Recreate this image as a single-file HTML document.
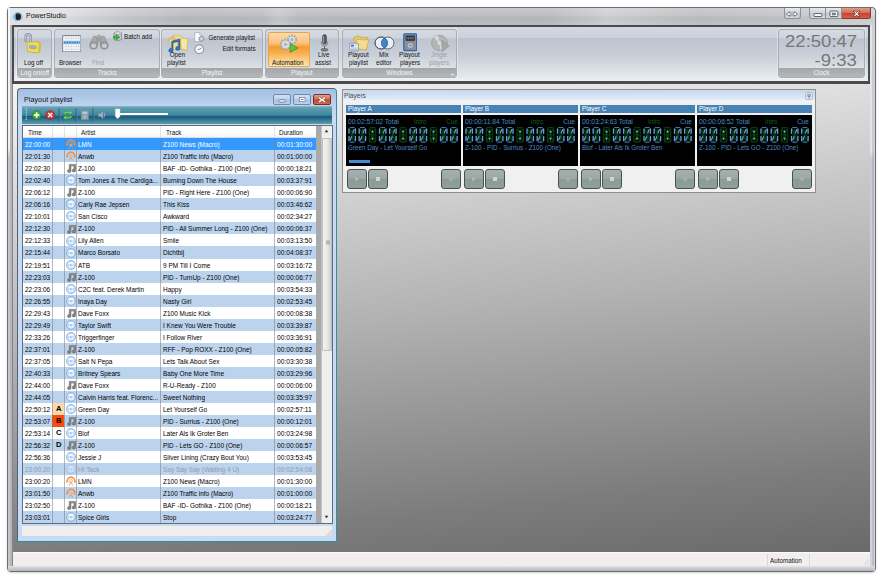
<!DOCTYPE html>
<html lang="en">
<head>
<meta charset="utf-8">
<title>PowerStudio</title>
<style>
html,body{margin:0;padding:0;background:#fff;}
body{width:885px;height:583px;position:relative;overflow:hidden;font-family:"Liberation Sans",sans-serif;font-size:7.5px;color:#000;line-height:1;}
div,span,svg{position:absolute;box-sizing:border-box;}
span.n{position:relative;display:inline-block;white-space:nowrap;transform:scaleX(.84);transform-origin:0 50%;}
span.n.r{transform-origin:100% 50%;}
span.n.m{transform-origin:50% 50%;}
b{font-weight:bold}

/* main window frame */
#win{left:7px;top:7px;width:868.5px;height:564.5px;border-radius:4px;background:linear-gradient(180deg,rgba(255,255,255,.22) 0,rgba(255,255,255,.05) 9px,rgba(0,0,0,.03) 10px,rgba(0,0,0,0) 18px),linear-gradient(90deg,#e1e3e6 0,#dcdee1 60px,#c6c8cb 120px,#b9bbbe 180px,#bbbdc0 255px,#c7c9cc 272px,#bbbdc0 292px,#b9bbbe 540px,#c3c5c8 575px,#cdcfd2 600px,#c6c8cb 640px,#bdbfc2 690px,#c2c4c7 780px,#d0d2d5 868px);box-shadow:0 0 0 1px #6c6e72 inset,0 1px 2px rgba(0,0,0,.18);overflow:hidden;}
#win .fl1{left:1px;top:1px;width:1.6px;height:563px;background:linear-gradient(180deg,#f4f5f6 0,#eceeef 140px,#c2c6ca 150px,#c2c6ca 100%);}
#win .fl2{left:2.6px;top:18px;width:2.6px;height:546px;background:#b3b7bc;}
#win .fr0{left:862.5px;top:76px;width:1px;height:484px;background:#a9abae;}
#win .fr1{left:863.2px;top:18px;width:2.2px;height:546px;background:linear-gradient(180deg,#e2e4e7 0,#e2e4e7 126px,#c9ccd0 134px,#d0d3d7 100%);}
#win .fr2{left:865.4px;top:18px;width:2.1px;height:546px;background:linear-gradient(180deg,#cdd0d4 0,#c6c9cd 126px,#b4b8bd 134px,#bcc0c5 100%);}
#win .fb{left:1px;top:559.2px;width:866.5px;height:4.4px;background:linear-gradient(180deg,#e2e4e7 0,#c9ccd0 45%,#b4b8bd 100%);}
#ttl{left:25.6px;top:12.3px;font-size:7.8px;color:#111;transform:scaleX(.9);transform-origin:0 50%;white-space:nowrap;}
#appico{left:13px;top:11.5px;width:9.5px;height:9.5px;}
.wb{top:7.8px;height:11.3px;border:1px solid #8c9096;border-top:none;background:linear-gradient(180deg,#e6e9ec 0,#d2d6da 45%,#bfc4c9 50%,#d4d8dc 100%);}
#wb-arr{left:783.5px;width:17px;border-radius:0 0 3px 3px;}
#wb-min{left:809px;width:17px;border-radius:0 0 0 3px;}
#wb-max{left:825.5px;width:16.5px;border-left:none;}
#wb-cls{left:841.5px;width:29.5px;border-radius:0 0 3px 0;border-color:#8a3a2c;border-left:none;background:linear-gradient(180deg,#e39a8a 0,#d4705c 45%,#c4432c 50%,#d2604a 100%);}

/* ribbon */
#rbf{left:12px;top:25px;width:858.1px;height:58.7px;background:#4b4b4b;}
#rb{left:14px;top:27px;width:853.8px;height:54.3px;background:linear-gradient(180deg,#d3d8e0 0,#ccd2db 10.7px,#bcc3ce 11.3px,#c9d0d8 30px,#e3e9ec 50px,#eef2f3 100%);}
.grp{top:29.1px;height:49.3px;border:1px solid #a9aeb6;border-radius:3px;background:linear-gradient(180deg,#d6dbe2 0,#cfd4dd 8.1px,#bec4cf 8.7px,#cbd1d9 26px,#dde2e6 39px,#dde2e6 100%);overflow:hidden;box-shadow:0 0 0 1px rgba(255,255,255,.35);}
.grp .gl{left:-10px;right:-10px;bottom:0;height:9.5px;background:linear-gradient(180deg,#a3a5a7 0,#b6b8ba 100%);color:#fff;text-align:center;font-size:7.6px;line-height:9.5px;}
.grp .gl span{position:relative;display:inline-block;white-space:nowrap;transform:scaleX(.85);top:.5px;opacity:.9;}
.rt{font-size:7.6px;white-space:nowrap;color:#111;}
.rt.d{color:#9aa0a8;}
.rt span.n{transform:scaleX(.82);}

/* MDI */
#mdi{left:13px;top:83.7px;width:856.5px;height:468.3px;background:linear-gradient(174deg,#f5f5f5 0,#b2b2b2 49%,#7c7c7c 85%,#6a6a6a 100%);}
#lb{left:12px;top:83.7px;width:1px;height:482.5px;background:#858585;}
#sb{left:13px;top:552px;width:856.5px;height:14.2px;background:#f1eeed;border-top:1px solid #fbfafa;}
#sb .sp{top:1px;width:1px;height:12px;background:#dcd9d7;}

/* playlist child window */
#pw{left:17px;top:88px;width:320px;height:454px;border-radius:4px 4px 1px 1px;border:1px solid #55636f;border-bottom-color:#2f89a3;border-right-color:#3a8aa8;background:linear-gradient(180deg,#a3bfe3 0,#bcd3ef 16px,#c6dcf6 30px,#c6dcf6 100%);}
#pw .cap{left:6px;top:6.6px;font-size:7.25px;color:#111;white-space:nowrap;}
.cb{top:5px;height:10.6px;border:1px solid #7189a8;border-radius:2px;background:linear-gradient(180deg,#d3e2f5 0,#bcd1ec 48%,#a6c0e3 52%,#bcd3ef 100%);}
#tb{left:4px;top:17.1px;width:310.2px;height:17.8px;background:linear-gradient(180deg,#93bccb 0,#6ba5b5 7%,#5e9cae 13%,#4b8fa6 35%,#3d839e 52%,#1c607f 57%,#1b5f7f 62%,#2a6f8a 72%,#4a8ba0 88%,#5c9aaa 100%);}
#lv{left:3.5px;top:36.3px;width:311.2px;height:399.2px;border:1px solid #666c74;border-top-width:1.2px;background:#fff;overflow:hidden;}
#lvh{left:0;top:0;width:293.6px;height:11.5px;background:linear-gradient(180deg,#fff 0,#fff 55%,#f3f4f6 100%);border-bottom:1px solid #d9dde2;}
#lvh .hs{top:0;width:1px;height:11px;background:#dfe2e6;}
#lvh .ht{top:2.9px;font-size:7.5px;color:#111;}
#rows{left:0;top:11.9px;width:293.6px;height:387px;}
.row{left:0;width:293.6px;height:12.1px;background:#fff;}
.row.alt{background:#bcd3ee;}
.row.sel{background:#3399ff;color:#fff;}
.row.dis{color:#909bab;}
.c{top:0;height:12.1px;font-size:7.7px;line-height:13.2px;white-space:nowrap;overflow:hidden;}
.c1{left:0;width:29.7px;padding-left:2.6px;}
.c3{left:41.6px;width:12px;border-left:1px solid rgba(120,125,135,.55);}
.c4{left:53.5px;width:84.3px;padding-left:1.1px;border-left:1px solid rgba(120,125,135,.55);}
.c5{left:137.8px;width:114px;padding-left:2px;border-left:1px solid rgba(120,125,135,.55);}
.c6{left:251.2px;width:42.4px;padding-left:2.4px;border-left:1px solid rgba(120,125,135,.55);}
.mk{left:29.8px;top:0;width:11.8px;height:12.1px;border-left:1px solid rgba(120,125,135,.55);text-align:center;line-height:12.2px;font-size:7.6px;color:#000;}
.mkA{background:#fcd9a9;}
.mkB{background:#fb4a0a;}
.row.nm::after{content:"";position:absolute;left:29.8px;top:0;width:1px;height:100%;background:rgba(120,125,135,.55);}
.c6 span.n{transform:scaleX(.865);}
.ri{left:1.2px;top:1.1px;width:10px;height:10px;}

#vs0{left:293.6px;top:0;width:5.6px;height:399px;background:linear-gradient(90deg,#a9a9a9 0,#aaa 75%,#d0d0d0 100%);}
#vs{left:299.2px;top:0;width:10px;height:399px;background:#efefef;}
#vs .th{left:0;top:11.5px;width:10px;height:213px;background:linear-gradient(90deg,#f4f4f4 0,#e9e9e9 50%,#cfcfcf 100%);border:1px solid #bdbdbd;border-radius:1px;}
#pst{left:4px;top:436.6px;width:310.2px;height:10.8px;background:#f1eeed;}

/* Players */
#pp{left:342px;top:88.6px;width:473.6px;height:104.8px;border:1px solid #8b8f94;background:#f0f0f0;}
#pp .cap{left:0;top:0;width:471.6px;height:12px;background:linear-gradient(180deg,#c8d8ec 0,#d6e3f2 50%,#e6eef8 85%,#f4f7fb 100%);}
#pp .capt{left:1.4px;top:2.8px;font-size:8px;color:#4a4a4a;}
.pl{top:15.4px;width:115px;height:85px;}
.plh{left:0;top:0;width:115px;height:8.3px;background:#4682b4;color:#fff;font-size:7.6px;line-height:8.8px;padding-left:2px;}
.disp{left:0;top:10px;width:115px;height:50.8px;background:#000;color:#4c8ac4;font-size:7.5px;}
.disp .tot{left:2.4px;top:2.6px;}
.disp .tot span.n{transform:scaleX(.885);}
.disp .intro{left:67.5px;top:2.8px;color:#0c6414;}
.disp .cue{right:3.6px;top:2.8px;color:#4c8ac4;}
.disp .cue.on{color:#0c6414;}
.disp .seg{left:0;top:11px;}
.disp .trk{left:1.8px;top:29.4px;}
.disp .prog{left:3px;top:45px;width:21px;height:2.8px;background:#4a8ad0;}
.pb{top:63.8px;width:19.6px;height:19.8px;border:1px solid #48524f;border-radius:3px;background:linear-gradient(180deg,#a4b0ad 0,#9aa8a5 48%,#8c9b98 52%,#909f9c 100%);}
.pb svg{left:4.8px;top:4.8px;}
</style>
</head>
<body>
<div id="win"><div class="fl1"></div><div class="fl2"></div><div class="fr0"></div><div class="fr1"></div><div class="fr2"></div><div class="fb"></div></div>
<svg id="appico" viewBox="0 0 10 10"><circle cx="5" cy="5" r="4.5" fill="#e8ecf0" stroke="#8e969e" stroke-width=".7"/><circle cx="5" cy="5" r="3.6" fill="#2f9fd8"/><path d="M5 1.4 A3.6 3.6 0 0 1 5 8.6 A3.6 3.6 0 0 1 3.6 8.3 L3.2 1.9 A3.6 3.6 0 0 1 5 1.4 Z" fill="#20303c"/><path d="M3.2 2.3 L8 5 L3.2 7.6 Z" fill="#151a20"/></svg>
<div id="ttl">PowerStudio</div>
<div class="wb" id="wb-arr"></div>
<div class="wb" id="wb-min"></div>
<div class="wb" id="wb-max"></div>
<div class="wb" id="wb-cls"></div>
<svg style="left:785px;top:9.5px;width:14px;height:8px" viewBox="0 0 14 8"><path d="M1.6 4 L4.6 1.6 V3.1 H9.4 V1.6 L12.4 4 L9.4 6.4 V4.9 H4.6 V6.4 Z" fill="#fff" stroke="#70757c" stroke-width=".9" stroke-linejoin="round"/></svg>
<svg style="left:812px;top:9.5px;width:12px;height:8px" viewBox="0 0 12 8"><rect x="2" y="3.6" width="7.8" height="2.9" rx=".8" fill="#fff" stroke="#4c5058" stroke-width=".9"/></svg>
<svg style="left:828px;top:9.5px;width:12px;height:8px" viewBox="0 0 12 8"><rect x="2" y="1" width="7.8" height="5.6" rx=".8" fill="#fff" stroke="#4c5058" stroke-width=".9"/><rect x="4.1" y="3" width="3.6" height="2" fill="#8d929a" stroke="#4c5058" stroke-width=".5"/></svg>
<svg style="left:851px;top:9.5px;width:12px;height:8px" viewBox="0 0 12 8"><path d="M2.2 1 H4.4 L5.6 2.6 L6.8 1 H9 L6.8 3.8 L9 6.6 H6.8 L5.6 5 L4.4 6.6 H2.2 L4.4 3.8 Z" fill="#fff" stroke="#5e241a" stroke-width=".7" stroke-linejoin="round"/></svg>

<div id="rbf"></div>
<div id="rb"></div>

<!-- ribbon groups -->
<div class="grp" style="left:17px;width:35px"><div class="gl"><span>Log on/off</span></div></div>
<div class="grp" style="left:54.3px;width:105.5px"><div class="gl"><span>Tracks</span></div></div>
<div class="grp" style="left:161.3px;width:101.7px"><div class="gl"><span>Playlist</span></div></div>
<div class="grp" style="left:264.7px;width:74.8px"><div class="gl"><span>Playout</span></div></div>
<div class="grp" style="left:341.6px;width:115.4px"><div class="gl"><span>Windows</span></div></div>
<div class="grp" style="left:777.7px;width:87.5px"><div class="gl"><span>Clock</span></div></div>

<!-- ribbon contents -->
<div id="autob" style="left:267.5px;top:31.5px;width:42.5px;height:35px;border:1px solid #e8a44c;border-radius:2px;background:linear-gradient(180deg,#fbd9ae 0,#f9c381 30%,#f7b15a 37%,#f59c2e 42%,#f7ab48 58%,#fbcf88 82%,#fde4b4 100%);"></div>

<!-- icons: lock -->
<svg style="left:23px;top:32px;width:19px;height:22px" viewBox="0 0 19 22"><path d="M2.7 8.8 V4.9 A2.5 2.7 0 0 1 7.7 4.9 V11" fill="none" stroke="#7f8e9e" stroke-width="2.5" stroke-linecap="round"/><path d="M2.7 8.6 V4.9 A2.5 2.7 0 0 1 7.7 4.9 V11" fill="none" stroke="#c9d5df" stroke-width="1" stroke-linecap="round"/><path d="M4.2 10.2 L15.4 9.6 L17.2 11 L17 19.6 L14.8 21 L4.4 19.4 Z" fill="#e3cb3c" stroke="#b8a22a" stroke-width=".7"/><path d="M4.6 10.6 L15 10.2 L14.8 20.4 L4.8 19 Z" fill="#efdc58"/><rect x="6.3" y="13.6" width="7" height="3" rx="1.5" fill="#9fb4cc" stroke="#7f90a8" stroke-width=".5" transform="rotate(5 10 15)"/></svg>
<div class="rt" style="left:23.7px;top:58.6px"><span class="n">Log off</span></div>

<!-- browser -->
<svg style="left:61.5px;top:34.5px;width:19.5px;height:17.5px" viewBox="0 0 19.5 17.5"><rect x=".6" y=".6" width="18.3" height="16.3" rx="1" fill="#fff" stroke="#7d8896" stroke-width="1.1"/><rect x="1.6" y="6" width="16.3" height="3" fill="#3b8fe0"/><path d="M1.4 3.4 H18 M1.4 6 H18 M1.4 9 H18 M1.4 11.6 H18 M1.4 14.2 H18 M4 1.4 V16.2 M6.6 1.4 V16.2 M9.2 1.4 V16.2 M11.8 1.4 V16.2 M14.4 1.4 V16.2 M16.8 1.4 V16.2" stroke="#c3cad4" stroke-width=".6"/></svg>
<div class="rt" style="left:59.4px;top:58.6px"><span class="n" style="transform:scaleX(.81)">Browser</span></div>

<!-- find (binoculars) -->
<svg style="left:88.5px;top:34.3px;width:20px;height:16px" viewBox="0 0 20 16"><rect x="7.4" y="3.2" width="5" height="5.4" fill="#a2a2a2"/><circle cx="9.9" cy="2.5" r="1.7" fill="#b0b0b0" stroke="#8e8e8e" stroke-width=".5"/><path d="M.9 11 L4.2 2.8 Q5.9 1.2 7.6 2.8 L8.6 11 Z" fill="#aaa" stroke="#8c8c8c" stroke-width=".6"/><path d="M11.2 11 L12.2 2.8 Q13.9 1.2 15.6 2.8 L18.9 11 Z" fill="#aaa" stroke="#8c8c8c" stroke-width=".6"/><ellipse cx="4.6" cy="11.5" rx="3.9" ry="3.7" fill="#9e9e9e" stroke="#858585" stroke-width=".7"/><ellipse cx="15.3" cy="11.5" rx="3.9" ry="3.7" fill="#9e9e9e" stroke="#858585" stroke-width=".7"/><ellipse cx="4.6" cy="11.7" rx="2.5" ry="2.3" fill="#cacaca"/><ellipse cx="15.3" cy="11.7" rx="2.5" ry="2.3" fill="#cacaca"/></svg>
<div class="rt d" style="left:91.5px;top:58.6px"><span class="n">Find</span></div>

<!-- batch add -->
<svg style="left:112.6px;top:31.3px;width:9.5px;height:10.5px" viewBox="0 0 9.5 10.5"><path d="M1 2 Q4.7 .2 8.5 2 V8.6 Q4.7 10.6 1 8.6 Z" fill="#c9ced4" stroke="#70777f" stroke-width=".7"/><ellipse cx="4.75" cy="2.1" rx="3.7" ry="1.2" fill="#e9edf0" stroke="#70777f" stroke-width=".5"/><path d="M.6 5.2 H3.4 V3.4 L6.8 6.2 L3.4 9 V7.2 H.6 Z" fill="#3fb33a" stroke="#1f7a1c" stroke-width=".5"/></svg>
<div class="rt" style="left:124px;top:33.4px"><span class="n">Batch add</span></div>

<!-- open playlist -->
<svg style="left:167.5px;top:33.5px;width:21px;height:20px" viewBox="0 0 21 20"><path d="M.8 4.8 L6.3 1.3 L13 1.8 L14.1 3.8 L19.7 4.8 L18.7 16.1 L3.2 15.1 Z" fill="#e3c56e" stroke="#c6a248" stroke-width=".5"/><path d="M.8 4.8 L8.8 6.6 L9.8 15.6 L3.2 15.1 Z" fill="#f3dc96" stroke="#d2b25a" stroke-width=".4"/><path d="M12.4 4.4 L19.7 4.8 L18.7 16.1 L13.6 15 Z" fill="#f7e5aa" stroke="#d2b25a" stroke-width=".4"/><path d="M6.3 1.3 L13 1.8 L14.1 3.8 L12.4 4.4 L8.8 6.6 Z" fill="#f1d98c"/><path d="M3.8 7.2 L11.9 5 V14.4 A2.1 1.9 0 1 1 10.7 12.7 V7.2 L5 8.8 V16.4 A2.1 1.9 0 1 1 3.8 14.7 Z" fill="#2c78d6" stroke="#103f86" stroke-width=".5"/></svg>
<div class="rt" style="left:168px;top:51.3px;width:18px;text-align:center"><span class="n m" style="left:0">Open</span></div>
<div class="rt" style="left:167.2px;top:58.6px"><span class="n" style="transform:scaleX(.81)">playlist</span></div>

<!-- generate playlist / edit formats -->
<svg style="left:194px;top:31.5px;width:11px;height:10.5px" viewBox="0 0 11 10.5"><path d="M.8 .6 H5.4 L7.6 2.8 V9.6 H.8 Z" fill="#fff" stroke="#9aa2ac" stroke-width=".7"/><path d="M5.4 .6 V2.8 H7.6" fill="#e4e8ee" stroke="#9aa2ac" stroke-width=".5"/><circle cx="7.4" cy="6.8" r="2.7" fill="#aab8c8" stroke="#76869a" stroke-width=".8" stroke-dasharray="1.1 .7"/><circle cx="7.4" cy="6.8" r="1" fill="#eef2f6"/></svg>
<svg style="left:194px;top:44px;width:10.5px;height:10.5px" viewBox="0 0 10.5 10.5"><circle cx="5.25" cy="5.25" r="4.4" fill="#f6f7f8" stroke="#979ba1" stroke-width="1.2"/><path d="M5.25 5.25 L7.6 3.8 M5.25 5.25 L3.6 5.9" stroke="#555" stroke-width=".7" fill="none"/></svg>
<div class="rt" style="right:629.8px;top:33.6px"><span class="n r" style="transform:scaleX(.815)">Generate playlist</span></div>
<div class="rt" style="right:629.8px;top:44.9px"><span class="n r" style="transform:scaleX(.815)">Edit formats</span></div>

<!-- automation -->
<svg style="left:278.5px;top:34px;width:20px;height:19px" viewBox="0 0 20 19"><g fill="#e3e6ea" stroke="#9fa5ad"><circle cx="13" cy="5.6" r="4.1" stroke-dasharray="1.5 1.1" stroke-width="2"/><circle cx="13" cy="5.6" r="3.5" stroke-width=".6"/><circle cx="6.6" cy="10.4" r="4.7" stroke-dasharray="1.7 1.2" stroke-width="2.2"/><circle cx="6.6" cy="10.4" r="4" stroke-width=".6"/></g><circle cx="6.6" cy="10.4" r="1.5" fill="#b9bfc7" stroke="#8b929b" stroke-width=".5"/><circle cx="13" cy="5.6" r="1.3" fill="#b9bfc7" stroke="#8b929b" stroke-width=".5"/><path d="M11.2 9.6 L19 14 L11.2 18.4 Z" fill="#55c744" stroke="#2f8f27" stroke-width=".7"/></svg>
<div class="rt" style="left:272.3px;top:58.6px"><span class="n">Automation</span></div>

<!-- live assist -->
<svg style="left:318.5px;top:34px;width:11px;height:18px" viewBox="0 0 11 18"><rect x="3.6" y=".6" width="3.8" height="9.6" rx="1.9" fill="#55595d" stroke="#3a3e42" stroke-width=".6"/><path d="M4.5 2 V8.8" stroke="#a4aab0" stroke-width=".8"/><path d="M2.2 7.6 Q2.2 12 5.5 12 Q8.8 12 8.8 7.6" fill="none" stroke="#6a6e72" stroke-width=".8"/><path d="M5.5 12 V14.8" stroke="#6a6e72" stroke-width="1"/><ellipse cx="5.5" cy="15.8" rx="3.6" ry="1.4" fill="#7a7e82" stroke="#4c5054" stroke-width=".5"/></svg>
<div class="rt" style="left:318.4px;top:51.3px"><span class="n">Live</span></div>
<div class="rt" style="left:315.4px;top:58.6px"><span class="n">assist</span></div>

<!-- playout playlist -->
<svg style="left:348.5px;top:34.5px;width:20px;height:17px" viewBox="0 0 20 17"><path d="M4.8 2.6 L9.6 .8 L11.4 2.2 L18.8 2.8 L17.4 14.8 L5.6 13.6 Z" fill="#e6c86a" stroke="#c09a38" stroke-width=".6"/><path d="M8 4.4 L19.6 5 L17.4 14.8 L5.6 13.6 Z" fill="#f4dc90" stroke="#c9a548" stroke-width=".6"/><rect x=".8" y="8.2" width="8.6" height="7.6" rx=".6" fill="#f2f5f9" stroke="#6a7f9a" stroke-width=".7"/><rect x="2" y="9.6" width="3" height="2" fill="#3a78c8"/><path d="M5.8 10 H8.4 M2 13 H8.4 M2 14.4 H8.4" stroke="#6f8fb8" stroke-width=".6"/></svg>
<div class="rt" style="left:347.6px;top:51.3px"><span class="n">Playout</span></div>
<div class="rt" style="left:348.6px;top:58.6px"><span class="n">playlist</span></div>

<!-- mix editor -->
<svg style="left:373.5px;top:35.5px;width:21px;height:14px" viewBox="0 0 21 14"><ellipse cx="7.2" cy="7" rx="6.2" ry="6" fill="#e6f0fa" stroke="#4d5661" stroke-width=".9"/><ellipse cx="13.8" cy="7" rx="6.2" ry="6" fill="#e6f0fa" stroke="#4d5661" stroke-width=".9"/><path d="M10.5 1.9 A6.2 6 0 0 1 10.5 12.1 A6.2 6 0 0 1 10.5 1.9 Z" fill="#3b86d8" stroke="#2a5a9a" stroke-width=".5"/><ellipse cx="7.2" cy="7" rx="6.2" ry="6" fill="none" stroke="#4d5661" stroke-width=".8"/></svg>
<div class="rt" style="left:379px;top:51.3px"><span class="n">Mix</span></div>
<div class="rt" style="left:375.6px;top:58.6px"><span class="n">editor</span></div>

<!-- playout players -->
<svg style="left:402.5px;top:33.2px;width:14.5px;height:18.5px" viewBox="0 0 14.5 18.5"><rect x=".8" y=".8" width="12.9" height="16.9" rx="1.2" fill="#8a9098" stroke="#2f66b4" stroke-width="1.3"/><rect x="2.6" y="2.6" width="9.3" height="5.2" fill="#2b2f36"/><path d="M4 4 V6.4 M5.6 4 V6.4 M7.2 4 V6.4 M8.8 4 V6.4 M10.2 4 V6.4" stroke="#9aa2ae" stroke-width=".7"/><circle cx="7.25" cy="12.4" r="3.2" fill="#b9bec6" stroke="#6a7079" stroke-width=".6"/><circle cx="7.25" cy="12.4" r="1.1" fill="#8a9098"/></svg>
<div class="rt" style="left:399.4px;top:51.3px"><span class="n">Playout</span></div>
<div class="rt" style="left:399.8px;top:58.6px"><span class="n">players</span></div>

<!-- jingle players -->
<svg style="left:431px;top:33.5px;width:19.5px;height:18.5px" viewBox="0 0 19.5 18.5"><circle cx="8.4" cy="9" r="7.8" fill="#b4b6b8" stroke="#97999b" stroke-width=".8"/><circle cx="8.4" cy="9" r="2.2" fill="#dcdee0" stroke="#a8aaac" stroke-width=".5"/><path d="M8.4 9 L3 3.4 A7.8 7.8 0 0 1 7 1.3 Z M8.4 9 L13.8 14.6 A7.8 7.8 0 0 1 9.8 16.7 Z" fill="#e2e3e4" opacity=".8"/><path d="M11 6.2 L18.4 12 L11 17.6 Z" fill="#a6a8aa" stroke="#909294" stroke-width=".6"/></svg>
<div class="rt d" style="left:431px;top:51.3px"><span class="n">Jingle</span></div>
<div class="rt d" style="left:429.2px;top:58.6px"><span class="n">players</span></div>
<div style="left:450.5px;top:70.5px;font-size:6px;color:#fff">+</div>

<!-- clock -->
<div id="clk1" style="right:27.8px;top:33.4px;font-size:17px;color:#777;white-space:nowrap;transform:scaleX(1.09);transform-origin:100% 50%">22:50:47</div>
<div id="clk2" style="right:27.8px;top:51.8px;font-size:17px;color:#777;white-space:nowrap;transform:scaleX(1.09);transform-origin:100% 50%">-9:33</div>

<!-- MDI client -->
<div id="mdi"></div>
<div id="lb"></div>
<div id="sb"><div class="sp" style="left:754.3px"></div><div class="sp" style="left:796.4px"></div><div style="left:757.2px;top:3.6px;font-size:7.5px;color:#111"><span class="n">Automation</span></div>
<svg style="right:1px;bottom:1px;width:7px;height:7px" viewBox="0 0 7 7"><path d="M5.5 1.5 h1 v1 h-1z M5.5 3.5 h1 v1 h-1z M5.5 5.5 h1 v1 h-1z M3.5 3.5 h1 v1 h-1z M3.5 5.5 h1 v1 h-1z M1.5 5.5 h1 v1 h-1z" fill="#c5c2c0"/></svg></div>

<!-- Playout playlist window -->
<div id="pw">
<div class="cap">Playout playlist</div>
<div class="cb" style="left:255px;width:18.2px"><svg viewBox="0 0 16 9" style="left:2px;top:.5px;width:12px;height:7.5px"><rect x="3.6" y="4.6" width="8.8" height="3" rx=".8" fill="#fff" stroke="#45556c" stroke-width=".9"/></svg></div>
<div class="cb" style="left:275px;width:18.2px"><svg viewBox="0 0 16 9" style="left:2px;top:.5px;width:12px;height:7.5px"><rect x="4.5" y="1.5" width="7.5" height="5.5" fill="#fff" stroke="#4a5a70" stroke-width=".7"/><path d="M6.5 4.2 H10" stroke="#4a5a70" stroke-width="1"/></svg></div>
<div class="cb" style="left:294.5px;width:18.8px;border-color:#7a3024;background:linear-gradient(180deg,#e2a090 0,#d06a54 48%,#c0452e 52%,#d46a52 100%)"><svg viewBox="0 0 16 9" style="left:2.5px;top:.5px;width:12px;height:7.5px"><path d="M4.6 .6 L8 3 L11.4 .6 L13.2 2.2 L10.2 4.5 L13.2 6.8 L11.4 8.4 L8 6 L4.6 8.4 L2.8 6.8 L5.8 4.5 L2.8 2.2 Z" fill="#fff" stroke="#6a2a20" stroke-width=".6"/></svg></div>
<div id="tb">
<svg style="left:0;top:0;width:115px;height:17.6px" viewBox="0 0 115 17.6">
<path d="M4.3 2 v1 M4.3 4.2 v1 M4.3 6.4 v1 M4.3 8.6 v1 M4.3 10.8 v1 M4.3 13 v1" stroke="#e4eef2" stroke-width="1"/>
<circle cx="14.6" cy="9" r="4.3" fill="#3fae37" stroke="#2a7f28" stroke-width=".7"/><path d="M14.6 6.2 V11.8 M11.8 9 H17.4" stroke="#fff" stroke-width="1.5"/>
<circle cx="28.2" cy="9" r="4.3" fill="#d9352e" stroke="#9c2420" stroke-width=".7"/><path d="M26.2 7 L30.2 11 M30.2 7 L26.2 11" stroke="#fff" stroke-width="1.4"/>
<path d="M37.3 2.5 V15.5" stroke="#1d5872" stroke-width="1"/><path d="M38.1 2.5 V15.5" stroke="#6fa6b8" stroke-width=".5"/>
<path d="M41.4 8 Q41.6 5.6 44.4 5.6 H47.4 V4 L50.4 6.4 L47.4 8.8 V7.2 H44.6 Q43.2 7.2 43 8 Z" fill="#6fd85e" stroke="#2f8f2a" stroke-width=".4"/>
<path d="M50.2 10 Q50 12.4 47.2 12.4 H44.2 V14 L41.2 11.6 L44.2 9.2 V10.8 H47 Q48.4 10.8 48.6 10 Z" fill="#6fd85e" stroke="#2f8f2a" stroke-width=".4"/>
<path d="M54.2 2.5 V15.5" stroke="#1d5872" stroke-width="1"/><path d="M55 2.5 V15.5" stroke="#6fa6b8" stroke-width=".5"/>
<rect x="59.2" y="4.6" width="7.2" height="9" fill="#8fa2ac" stroke="#7890a0" stroke-width=".5"/><rect x="60.4" y="5.8" width="4.8" height="2.2" fill="#b9c6cc"/><circle cx="62.8" cy="11" r="1.6" fill="#a9b8c0"/>
<path d="M71.2 2.5 V15.5" stroke="#1d5872" stroke-width="1"/><path d="M72 2.5 V15.5" stroke="#6fa6b8" stroke-width=".5"/>
<path d="M76.4 7.6 H78.4 L81 5.2 V12.8 L78.4 10.4 H76.4 Z" fill="#9fb0b8" stroke="#7f949e" stroke-width=".4"/><path d="M82.2 6.8 Q83.6 9 82.2 11.2" stroke="#b4c4cc" stroke-width=".7" fill="none"/>
<path d="M93.4 2.9 H98 V10.4 L95.7 12.8 L93.4 10.4 Z" fill="#fff" stroke="#d0dde4" stroke-width=".4"/>
</svg>
<div style="left:97.5px;top:6.7px;width:48.5px;height:1.8px;background:#fff"></div>
</div>
<div id="lv">
<div id="lvh">
<div class="hs" style="left:29.8px"></div><div class="hs" style="left:41.6px"></div><div class="hs" style="left:53.5px"></div><div class="hs" style="left:137.8px"></div><div class="hs" style="left:251.2px"></div>
<div class="ht" style="left:5px"><span class="n">Time</span></div>
<div class="ht" style="left:58px"><span class="n">Artist</span></div>
<div class="ht" style="left:143.4px"><span class="n">Track</span></div>
<div class="ht" style="left:256.2px"><span class="n">Duration</span></div>
</div>
<div id="rows">
<div class="row sel nm" style="top:0.0px"><div class="c c1"><span class="n">22:00:00</span></div><div class="c c3"><svg class="ri" viewBox="0 0 10 10"><path d="M.9 6.6 A4.1 5.5 0 0 1 9.1 6.6" fill="none" stroke="#f6913a" stroke-width="1.7"/><path d="M3 6.5 A2 2.9 0 0 1 7 6.5" fill="none" stroke="#f8a45c" stroke-width="1" stroke-dasharray="1.3 .5"/><path d="M5 6.2 L3.1 9.7 M5 6.2 L6.9 9.7" stroke="#b9a48c" stroke-width=".8" fill="none"/><circle cx="5" cy="6.1" r="1" fill="#f3b27a"/></svg></div><div class="c c4"><span class="n">LMN</span></div><div class="c c5"><span class="n">Z100 News (Macro)</span></div><div class="c c6"><span class="n">00:01:30:00</span></div></div>
<div class="row alt nm" style="top:12.04px"><div class="c c1"><span class="n">22:01:30</span></div><div class="c c3"><svg class="ri" viewBox="0 0 10 10"><path d="M.9 6.6 A4.1 5.5 0 0 1 9.1 6.6" fill="none" stroke="#f6913a" stroke-width="1.7"/><path d="M3 6.5 A2 2.9 0 0 1 7 6.5" fill="none" stroke="#f8a45c" stroke-width="1" stroke-dasharray="1.3 .5"/><path d="M5 6.2 L3.1 9.7 M5 6.2 L6.9 9.7" stroke="#b9a48c" stroke-width=".8" fill="none"/><circle cx="5" cy="6.1" r="1" fill="#f3b27a"/></svg></div><div class="c c4"><span class="n">Anwb</span></div><div class="c c5"><span class="n">Z100 Traffic info (Macro)</span></div><div class="c c6"><span class="n">00:01:00:00</span></div></div>
<div class="row nm" style="top:24.07px"><div class="c c1"><span class="n">22:02:30</span></div><div class="c c3"><svg class="ri" viewBox="0 0 10 10"><path d="M3.3 1.4 H9.6 V7.4 A1.7 1.5 0 1 1 8 6 V3 H4.9 V8 A1.7 1.5 0 1 1 3.3 6.6 Z" fill="#858585" stroke="#555" stroke-width=".5"/><path d="M3.8 1.9 H9 V2.5 H3.8 Z" fill="#a8a8a8"/></svg></div><div class="c c4"><span class="n">Z-100</span></div><div class="c c5"><span class="n">BAF -ID- Gothika - Z100 (One)</span></div><div class="c c6"><span class="n">00:00:18:21</span></div></div>
<div class="row alt nm" style="top:36.11px"><div class="c c1"><span class="n">22:02:40</span></div><div class="c c3"><svg class="ri" viewBox="0 0 10 10"><circle cx="5" cy="5" r="4.5" fill="#bdd8f6" stroke="#78a8de" stroke-width=".75"/><circle cx="5" cy="5" r="3.3" fill="#f2f8fe"/><path d="M5 5 L2.2 3.6 A3.2 3.2 0 0 0 2.3 6.7 Z" fill="#b4d2f4" opacity=".85"/><path d="M5 5 L7.7 3.4 A3.2 3.2 0 0 1 7.6 6.9 Z" fill="#c4dcf7" opacity=".8"/><path d="M5 5 L3.6 8 A3.2 3.2 0 0 0 6.4 8 Z" fill="#cfe3f9" opacity=".8"/><circle cx="5" cy="5.1" r=".9" fill="#8fbaea"/></svg></div><div class="c c4"><span class="n">Tom Jones &amp; The Cardiga...</span></div><div class="c c5"><span class="n">Burning Down The House</span></div><div class="c c6"><span class="n">00:03:37:91</span></div></div>
<div class="row nm" style="top:48.14px"><div class="c c1"><span class="n">22:06:12</span></div><div class="c c3"><svg class="ri" viewBox="0 0 10 10"><path d="M3.3 1.4 H9.6 V7.4 A1.7 1.5 0 1 1 8 6 V3 H4.9 V8 A1.7 1.5 0 1 1 3.3 6.6 Z" fill="#858585" stroke="#555" stroke-width=".5"/><path d="M3.8 1.9 H9 V2.5 H3.8 Z" fill="#a8a8a8"/></svg></div><div class="c c4"><span class="n">Z-100</span></div><div class="c c5"><span class="n">PID - Right Here - Z100 (One)</span></div><div class="c c6"><span class="n">00:00:06:90</span></div></div>
<div class="row alt nm" style="top:60.17px"><div class="c c1"><span class="n">22:06:16</span></div><div class="c c3"><svg class="ri" viewBox="0 0 10 10"><circle cx="5" cy="5" r="4.5" fill="#bdd8f6" stroke="#78a8de" stroke-width=".75"/><circle cx="5" cy="5" r="3.3" fill="#f2f8fe"/><path d="M5 5 L2.2 3.6 A3.2 3.2 0 0 0 2.3 6.7 Z" fill="#b4d2f4" opacity=".85"/><path d="M5 5 L7.7 3.4 A3.2 3.2 0 0 1 7.6 6.9 Z" fill="#c4dcf7" opacity=".8"/><path d="M5 5 L3.6 8 A3.2 3.2 0 0 0 6.4 8 Z" fill="#cfe3f9" opacity=".8"/><circle cx="5" cy="5.1" r=".9" fill="#8fbaea"/></svg></div><div class="c c4"><span class="n">Carly Rae Jepsen</span></div><div class="c c5"><span class="n">This Kiss</span></div><div class="c c6"><span class="n">00:03:46:62</span></div></div>
<div class="row nm" style="top:72.21px"><div class="c c1"><span class="n">22:10:01</span></div><div class="c c3"><svg class="ri" viewBox="0 0 10 10"><circle cx="5" cy="5" r="4.5" fill="#bdd8f6" stroke="#78a8de" stroke-width=".75"/><circle cx="5" cy="5" r="3.3" fill="#f2f8fe"/><path d="M5 5 L2.2 3.6 A3.2 3.2 0 0 0 2.3 6.7 Z" fill="#b4d2f4" opacity=".85"/><path d="M5 5 L7.7 3.4 A3.2 3.2 0 0 1 7.6 6.9 Z" fill="#c4dcf7" opacity=".8"/><path d="M5 5 L3.6 8 A3.2 3.2 0 0 0 6.4 8 Z" fill="#cfe3f9" opacity=".8"/><circle cx="5" cy="5.1" r=".9" fill="#8fbaea"/></svg></div><div class="c c4"><span class="n">San Cisco</span></div><div class="c c5"><span class="n">Awkward</span></div><div class="c c6"><span class="n">00:02:34:27</span></div></div>
<div class="row alt nm" style="top:84.25px"><div class="c c1"><span class="n">22:12:30</span></div><div class="c c3"><svg class="ri" viewBox="0 0 10 10"><path d="M3.3 1.4 H9.6 V7.4 A1.7 1.5 0 1 1 8 6 V3 H4.9 V8 A1.7 1.5 0 1 1 3.3 6.6 Z" fill="#858585" stroke="#555" stroke-width=".5"/><path d="M3.8 1.9 H9 V2.5 H3.8 Z" fill="#a8a8a8"/></svg></div><div class="c c4"><span class="n">Z-100</span></div><div class="c c5"><span class="n">PID - All Summer Long - Z100 (One)</span></div><div class="c c6"><span class="n">00:00:06:37</span></div></div>
<div class="row nm" style="top:96.28px"><div class="c c1"><span class="n">22:12:33</span></div><div class="c c3"><svg class="ri" viewBox="0 0 10 10"><circle cx="5" cy="5" r="4.5" fill="#bdd8f6" stroke="#78a8de" stroke-width=".75"/><circle cx="5" cy="5" r="3.3" fill="#f2f8fe"/><path d="M5 5 L2.2 3.6 A3.2 3.2 0 0 0 2.3 6.7 Z" fill="#b4d2f4" opacity=".85"/><path d="M5 5 L7.7 3.4 A3.2 3.2 0 0 1 7.6 6.9 Z" fill="#c4dcf7" opacity=".8"/><path d="M5 5 L3.6 8 A3.2 3.2 0 0 0 6.4 8 Z" fill="#cfe3f9" opacity=".8"/><circle cx="5" cy="5.1" r=".9" fill="#8fbaea"/></svg></div><div class="c c4"><span class="n">Lily Allen</span></div><div class="c c5"><span class="n">Smile</span></div><div class="c c6"><span class="n">00:03:13:50</span></div></div>
<div class="row alt nm" style="top:108.31px"><div class="c c1"><span class="n">22:15:44</span></div><div class="c c3"><svg class="ri" viewBox="0 0 10 10"><circle cx="5" cy="5" r="4.5" fill="#bdd8f6" stroke="#78a8de" stroke-width=".75"/><circle cx="5" cy="5" r="3.3" fill="#f2f8fe"/><path d="M5 5 L2.2 3.6 A3.2 3.2 0 0 0 2.3 6.7 Z" fill="#b4d2f4" opacity=".85"/><path d="M5 5 L7.7 3.4 A3.2 3.2 0 0 1 7.6 6.9 Z" fill="#c4dcf7" opacity=".8"/><path d="M5 5 L3.6 8 A3.2 3.2 0 0 0 6.4 8 Z" fill="#cfe3f9" opacity=".8"/><circle cx="5" cy="5.1" r=".9" fill="#8fbaea"/></svg></div><div class="c c4"><span class="n">Marco Borsato</span></div><div class="c c5"><span class="n">Dichtbij</span></div><div class="c c6"><span class="n">00:04:08:37</span></div></div>
<div class="row nm" style="top:120.35px"><div class="c c1"><span class="n">22:19:51</span></div><div class="c c3"><svg class="ri" viewBox="0 0 10 10"><circle cx="5" cy="5" r="4.5" fill="#bdd8f6" stroke="#78a8de" stroke-width=".75"/><circle cx="5" cy="5" r="3.3" fill="#f2f8fe"/><path d="M5 5 L2.2 3.6 A3.2 3.2 0 0 0 2.3 6.7 Z" fill="#b4d2f4" opacity=".85"/><path d="M5 5 L7.7 3.4 A3.2 3.2 0 0 1 7.6 6.9 Z" fill="#c4dcf7" opacity=".8"/><path d="M5 5 L3.6 8 A3.2 3.2 0 0 0 6.4 8 Z" fill="#cfe3f9" opacity=".8"/><circle cx="5" cy="5.1" r=".9" fill="#8fbaea"/></svg></div><div class="c c4"><span class="n">ATB</span></div><div class="c c5"><span class="n">9 PM Till I Come</span></div><div class="c c6"><span class="n">00:03:16:72</span></div></div>
<div class="row alt nm" style="top:132.38px"><div class="c c1"><span class="n">22:23:03</span></div><div class="c c3"><svg class="ri" viewBox="0 0 10 10"><path d="M3.3 1.4 H9.6 V7.4 A1.7 1.5 0 1 1 8 6 V3 H4.9 V8 A1.7 1.5 0 1 1 3.3 6.6 Z" fill="#858585" stroke="#555" stroke-width=".5"/><path d="M3.8 1.9 H9 V2.5 H3.8 Z" fill="#a8a8a8"/></svg></div><div class="c c4"><span class="n">Z-100</span></div><div class="c c5"><span class="n">PID - TurnUp - Z100 (One)</span></div><div class="c c6"><span class="n">00:00:06:77</span></div></div>
<div class="row nm" style="top:144.42px"><div class="c c1"><span class="n">22:23:06</span></div><div class="c c3"><svg class="ri" viewBox="0 0 10 10"><circle cx="5" cy="5" r="4.5" fill="#bdd8f6" stroke="#78a8de" stroke-width=".75"/><circle cx="5" cy="5" r="3.3" fill="#f2f8fe"/><path d="M5 5 L2.2 3.6 A3.2 3.2 0 0 0 2.3 6.7 Z" fill="#b4d2f4" opacity=".85"/><path d="M5 5 L7.7 3.4 A3.2 3.2 0 0 1 7.6 6.9 Z" fill="#c4dcf7" opacity=".8"/><path d="M5 5 L3.6 8 A3.2 3.2 0 0 0 6.4 8 Z" fill="#cfe3f9" opacity=".8"/><circle cx="5" cy="5.1" r=".9" fill="#8fbaea"/></svg></div><div class="c c4"><span class="n">C2C feat. Derek Martin</span></div><div class="c c5"><span class="n">Happy</span></div><div class="c c6"><span class="n">00:03:54:33</span></div></div>
<div class="row alt nm" style="top:156.46px"><div class="c c1"><span class="n">22:26:55</span></div><div class="c c3"><svg class="ri" viewBox="0 0 10 10"><circle cx="5" cy="5" r="4.5" fill="#bdd8f6" stroke="#78a8de" stroke-width=".75"/><circle cx="5" cy="5" r="3.3" fill="#f2f8fe"/><path d="M5 5 L2.2 3.6 A3.2 3.2 0 0 0 2.3 6.7 Z" fill="#b4d2f4" opacity=".85"/><path d="M5 5 L7.7 3.4 A3.2 3.2 0 0 1 7.6 6.9 Z" fill="#c4dcf7" opacity=".8"/><path d="M5 5 L3.6 8 A3.2 3.2 0 0 0 6.4 8 Z" fill="#cfe3f9" opacity=".8"/><circle cx="5" cy="5.1" r=".9" fill="#8fbaea"/></svg></div><div class="c c4"><span class="n">Inaya Day</span></div><div class="c c5"><span class="n">Nasty Girl</span></div><div class="c c6"><span class="n">00:02:53:45</span></div></div>
<div class="row nm" style="top:168.49px"><div class="c c1"><span class="n">22:29:43</span></div><div class="c c3"><svg class="ri" viewBox="0 0 10 10"><path d="M3.3 1.4 H9.6 V7.4 A1.7 1.5 0 1 1 8 6 V3 H4.9 V8 A1.7 1.5 0 1 1 3.3 6.6 Z" fill="#858585" stroke="#555" stroke-width=".5"/><path d="M3.8 1.9 H9 V2.5 H3.8 Z" fill="#a8a8a8"/></svg></div><div class="c c4"><span class="n">Dave Foxx</span></div><div class="c c5"><span class="n">Z100 Music Kick</span></div><div class="c c6"><span class="n">00:00:08:38</span></div></div>
<div class="row alt nm" style="top:180.53px"><div class="c c1"><span class="n">22:29:49</span></div><div class="c c3"><svg class="ri" viewBox="0 0 10 10"><circle cx="5" cy="5" r="4.5" fill="#bdd8f6" stroke="#78a8de" stroke-width=".75"/><circle cx="5" cy="5" r="3.3" fill="#f2f8fe"/><path d="M5 5 L2.2 3.6 A3.2 3.2 0 0 0 2.3 6.7 Z" fill="#b4d2f4" opacity=".85"/><path d="M5 5 L7.7 3.4 A3.2 3.2 0 0 1 7.6 6.9 Z" fill="#c4dcf7" opacity=".8"/><path d="M5 5 L3.6 8 A3.2 3.2 0 0 0 6.4 8 Z" fill="#cfe3f9" opacity=".8"/><circle cx="5" cy="5.1" r=".9" fill="#8fbaea"/></svg></div><div class="c c4"><span class="n">Taylor Swift</span></div><div class="c c5"><span class="n">I Knew You Were Trouble</span></div><div class="c c6"><span class="n">00:03:39:87</span></div></div>
<div class="row nm" style="top:192.56px"><div class="c c1"><span class="n">22:33:26</span></div><div class="c c3"><svg class="ri" viewBox="0 0 10 10"><circle cx="5" cy="5" r="4.5" fill="#bdd8f6" stroke="#78a8de" stroke-width=".75"/><circle cx="5" cy="5" r="3.3" fill="#f2f8fe"/><path d="M5 5 L2.2 3.6 A3.2 3.2 0 0 0 2.3 6.7 Z" fill="#b4d2f4" opacity=".85"/><path d="M5 5 L7.7 3.4 A3.2 3.2 0 0 1 7.6 6.9 Z" fill="#c4dcf7" opacity=".8"/><path d="M5 5 L3.6 8 A3.2 3.2 0 0 0 6.4 8 Z" fill="#cfe3f9" opacity=".8"/><circle cx="5" cy="5.1" r=".9" fill="#8fbaea"/></svg></div><div class="c c4"><span class="n">Triggerfinger</span></div><div class="c c5"><span class="n">I Follow River</span></div><div class="c c6"><span class="n">00:03:36:91</span></div></div>
<div class="row alt nm" style="top:204.59px"><div class="c c1"><span class="n">22:37:01</span></div><div class="c c3"><svg class="ri" viewBox="0 0 10 10"><path d="M3.3 1.4 H9.6 V7.4 A1.7 1.5 0 1 1 8 6 V3 H4.9 V8 A1.7 1.5 0 1 1 3.3 6.6 Z" fill="#858585" stroke="#555" stroke-width=".5"/><path d="M3.8 1.9 H9 V2.5 H3.8 Z" fill="#a8a8a8"/></svg></div><div class="c c4"><span class="n">Z-100</span></div><div class="c c5"><span class="n">RFF - Pop ROXX - Z100 (One)</span></div><div class="c c6"><span class="n">00:00:05:82</span></div></div>
<div class="row nm" style="top:216.63px"><div class="c c1"><span class="n">22:37:05</span></div><div class="c c3"><svg class="ri" viewBox="0 0 10 10"><circle cx="5" cy="5" r="4.5" fill="#bdd8f6" stroke="#78a8de" stroke-width=".75"/><circle cx="5" cy="5" r="3.3" fill="#f2f8fe"/><path d="M5 5 L2.2 3.6 A3.2 3.2 0 0 0 2.3 6.7 Z" fill="#b4d2f4" opacity=".85"/><path d="M5 5 L7.7 3.4 A3.2 3.2 0 0 1 7.6 6.9 Z" fill="#c4dcf7" opacity=".8"/><path d="M5 5 L3.6 8 A3.2 3.2 0 0 0 6.4 8 Z" fill="#cfe3f9" opacity=".8"/><circle cx="5" cy="5.1" r=".9" fill="#8fbaea"/></svg></div><div class="c c4"><span class="n">Salt N Pepa</span></div><div class="c c5"><span class="n">Lets Talk About Sex</span></div><div class="c c6"><span class="n">00:03:30:38</span></div></div>
<div class="row alt nm" style="top:228.66px"><div class="c c1"><span class="n">22:40:33</span></div><div class="c c3"><svg class="ri" viewBox="0 0 10 10"><circle cx="5" cy="5" r="4.5" fill="#bdd8f6" stroke="#78a8de" stroke-width=".75"/><circle cx="5" cy="5" r="3.3" fill="#f2f8fe"/><path d="M5 5 L2.2 3.6 A3.2 3.2 0 0 0 2.3 6.7 Z" fill="#b4d2f4" opacity=".85"/><path d="M5 5 L7.7 3.4 A3.2 3.2 0 0 1 7.6 6.9 Z" fill="#c4dcf7" opacity=".8"/><path d="M5 5 L3.6 8 A3.2 3.2 0 0 0 6.4 8 Z" fill="#cfe3f9" opacity=".8"/><circle cx="5" cy="5.1" r=".9" fill="#8fbaea"/></svg></div><div class="c c4"><span class="n">Britney Spears</span></div><div class="c c5"><span class="n">Baby One More Time</span></div><div class="c c6"><span class="n">00:03:29:96</span></div></div>
<div class="row nm" style="top:240.7px"><div class="c c1"><span class="n">22:44:00</span></div><div class="c c3"><svg class="ri" viewBox="0 0 10 10"><path d="M3.3 1.4 H9.6 V7.4 A1.7 1.5 0 1 1 8 6 V3 H4.9 V8 A1.7 1.5 0 1 1 3.3 6.6 Z" fill="#858585" stroke="#555" stroke-width=".5"/><path d="M3.8 1.9 H9 V2.5 H3.8 Z" fill="#a8a8a8"/></svg></div><div class="c c4"><span class="n">Dave Foxx</span></div><div class="c c5"><span class="n">R-U-Ready - Z100</span></div><div class="c c6"><span class="n">00:00:06:00</span></div></div>
<div class="row alt nm" style="top:252.74px"><div class="c c1"><span class="n">22:44:05</span></div><div class="c c3"><svg class="ri" viewBox="0 0 10 10"><circle cx="5" cy="5" r="4.5" fill="#bdd8f6" stroke="#78a8de" stroke-width=".75"/><circle cx="5" cy="5" r="3.3" fill="#f2f8fe"/><path d="M5 5 L2.2 3.6 A3.2 3.2 0 0 0 2.3 6.7 Z" fill="#b4d2f4" opacity=".85"/><path d="M5 5 L7.7 3.4 A3.2 3.2 0 0 1 7.6 6.9 Z" fill="#c4dcf7" opacity=".8"/><path d="M5 5 L3.6 8 A3.2 3.2 0 0 0 6.4 8 Z" fill="#cfe3f9" opacity=".8"/><circle cx="5" cy="5.1" r=".9" fill="#8fbaea"/></svg></div><div class="c c4"><span class="n">Calvin Harris feat. Florenc...</span></div><div class="c c5"><span class="n">Sweet Nothing</span></div><div class="c c6"><span class="n">00:03:35:97</span></div></div>
<div class="row" style="top:264.77px"><div class="c c1"><span class="n">22:50:12</span></div><div class="mk mkA"><b>A</b></div><div class="c c3"><svg class="ri" viewBox="0 0 10 10"><circle cx="5" cy="5" r="4.5" fill="#bdd8f6" stroke="#78a8de" stroke-width=".75"/><circle cx="5" cy="5" r="3.3" fill="#f2f8fe"/><path d="M5 5 L2.2 3.6 A3.2 3.2 0 0 0 2.3 6.7 Z" fill="#b4d2f4" opacity=".85"/><path d="M5 5 L7.7 3.4 A3.2 3.2 0 0 1 7.6 6.9 Z" fill="#c4dcf7" opacity=".8"/><path d="M5 5 L3.6 8 A3.2 3.2 0 0 0 6.4 8 Z" fill="#cfe3f9" opacity=".8"/><circle cx="5" cy="5.1" r=".9" fill="#8fbaea"/></svg></div><div class="c c4"><span class="n">Green Day</span></div><div class="c c5"><span class="n">Let Yourself Go</span></div><div class="c c6"><span class="n">00:02:57:11</span></div></div>
<div class="row alt" style="top:276.81px"><div class="c c1"><span class="n">22:53:07</span></div><div class="mk mkB"><b>B</b></div><div class="c c3"><svg class="ri" viewBox="0 0 10 10"><path d="M3.3 1.4 H9.6 V7.4 A1.7 1.5 0 1 1 8 6 V3 H4.9 V8 A1.7 1.5 0 1 1 3.3 6.6 Z" fill="#858585" stroke="#555" stroke-width=".5"/><path d="M3.8 1.9 H9 V2.5 H3.8 Z" fill="#a8a8a8"/></svg></div><div class="c c4"><span class="n">Z-100</span></div><div class="c c5"><span class="n">PID - Surrius - Z100 (One)</span></div><div class="c c6"><span class="n">00:00:12:01</span></div></div>
<div class="row" style="top:288.84px"><div class="c c1"><span class="n">22:53:14</span></div><div class="mk mkC"><b>C</b></div><div class="c c3"><svg class="ri" viewBox="0 0 10 10"><circle cx="5" cy="5" r="4.5" fill="#bdd8f6" stroke="#78a8de" stroke-width=".75"/><circle cx="5" cy="5" r="3.3" fill="#f2f8fe"/><path d="M5 5 L2.2 3.6 A3.2 3.2 0 0 0 2.3 6.7 Z" fill="#b4d2f4" opacity=".85"/><path d="M5 5 L7.7 3.4 A3.2 3.2 0 0 1 7.6 6.9 Z" fill="#c4dcf7" opacity=".8"/><path d="M5 5 L3.6 8 A3.2 3.2 0 0 0 6.4 8 Z" fill="#cfe3f9" opacity=".8"/><circle cx="5" cy="5.1" r=".9" fill="#8fbaea"/></svg></div><div class="c c4"><span class="n">Blof</span></div><div class="c c5"><span class="n">Later Als Ik Groter Ben</span></div><div class="c c6"><span class="n">00:03:24:98</span></div></div>
<div class="row alt" style="top:300.88px"><div class="c c1"><span class="n">22:56:32</span></div><div class="mk mkD"><b>D</b></div><div class="c c3"><svg class="ri" viewBox="0 0 10 10"><path d="M3.3 1.4 H9.6 V7.4 A1.7 1.5 0 1 1 8 6 V3 H4.9 V8 A1.7 1.5 0 1 1 3.3 6.6 Z" fill="#858585" stroke="#555" stroke-width=".5"/><path d="M3.8 1.9 H9 V2.5 H3.8 Z" fill="#a8a8a8"/></svg></div><div class="c c4"><span class="n">Z-100</span></div><div class="c c5"><span class="n">PID - Lets GO - Z100 (One)</span></div><div class="c c6"><span class="n">00:00:06:57</span></div></div>
<div class="row nm" style="top:312.91px"><div class="c c1"><span class="n">22:56:36</span></div><div class="c c3"><svg class="ri" viewBox="0 0 10 10"><circle cx="5" cy="5" r="4.5" fill="#bdd8f6" stroke="#78a8de" stroke-width=".75"/><circle cx="5" cy="5" r="3.3" fill="#f2f8fe"/><path d="M5 5 L2.2 3.6 A3.2 3.2 0 0 0 2.3 6.7 Z" fill="#b4d2f4" opacity=".85"/><path d="M5 5 L7.7 3.4 A3.2 3.2 0 0 1 7.6 6.9 Z" fill="#c4dcf7" opacity=".8"/><path d="M5 5 L3.6 8 A3.2 3.2 0 0 0 6.4 8 Z" fill="#cfe3f9" opacity=".8"/><circle cx="5" cy="5.1" r=".9" fill="#8fbaea"/></svg></div><div class="c c4"><span class="n">Jessie J</span></div><div class="c c5"><span class="n">Silver Lining (Crazy Bout You)</span></div><div class="c c6"><span class="n">00:03:53:45</span></div></div>
<div class="row alt dis nm" style="top:324.94px"><div class="c c1"><span class="n">23:00:20</span></div><div class="c c3"><svg class="ri" style="opacity:.45" viewBox="0 0 10 10"><circle cx="5" cy="5" r="4.5" fill="#bdd8f6" stroke="#78a8de" stroke-width=".75"/><circle cx="5" cy="5" r="3.3" fill="#f2f8fe"/><path d="M5 5 L2.2 3.6 A3.2 3.2 0 0 0 2.3 6.7 Z" fill="#b4d2f4" opacity=".85"/><path d="M5 5 L7.7 3.4 A3.2 3.2 0 0 1 7.6 6.9 Z" fill="#c4dcf7" opacity=".8"/><path d="M5 5 L3.6 8 A3.2 3.2 0 0 0 6.4 8 Z" fill="#cfe3f9" opacity=".8"/><circle cx="5" cy="5.1" r=".9" fill="#8fbaea"/></svg></div><div class="c c4"><span class="n">HI Tack</span></div><div class="c c5"><span class="n">Say Say Say (Waiting 4 U)</span></div><div class="c c6"><span class="n">00:02:54:08</span></div></div>
<div class="row nm" style="top:336.98px"><div class="c c1"><span class="n">23:00:20</span></div><div class="c c3"><svg class="ri" viewBox="0 0 10 10"><path d="M.9 6.6 A4.1 5.5 0 0 1 9.1 6.6" fill="none" stroke="#f6913a" stroke-width="1.7"/><path d="M3 6.5 A2 2.9 0 0 1 7 6.5" fill="none" stroke="#f8a45c" stroke-width="1" stroke-dasharray="1.3 .5"/><path d="M5 6.2 L3.1 9.7 M5 6.2 L6.9 9.7" stroke="#b9a48c" stroke-width=".8" fill="none"/><circle cx="5" cy="6.1" r="1" fill="#f3b27a"/></svg></div><div class="c c4"><span class="n">LMN</span></div><div class="c c5"><span class="n">Z100 News (Macro)</span></div><div class="c c6"><span class="n">00:01:30:00</span></div></div>
<div class="row alt nm" style="top:349.01px"><div class="c c1"><span class="n">23:01:50</span></div><div class="c c3"><svg class="ri" viewBox="0 0 10 10"><path d="M.9 6.6 A4.1 5.5 0 0 1 9.1 6.6" fill="none" stroke="#f6913a" stroke-width="1.7"/><path d="M3 6.5 A2 2.9 0 0 1 7 6.5" fill="none" stroke="#f8a45c" stroke-width="1" stroke-dasharray="1.3 .5"/><path d="M5 6.2 L3.1 9.7 M5 6.2 L6.9 9.7" stroke="#b9a48c" stroke-width=".8" fill="none"/><circle cx="5" cy="6.1" r="1" fill="#f3b27a"/></svg></div><div class="c c4"><span class="n">Anwb</span></div><div class="c c5"><span class="n">Z100 Traffic info (Macro)</span></div><div class="c c6"><span class="n">00:01:00:00</span></div></div>
<div class="row nm" style="top:361.05px"><div class="c c1"><span class="n">23:02:50</span></div><div class="c c3"><svg class="ri" viewBox="0 0 10 10"><path d="M3.3 1.4 H9.6 V7.4 A1.7 1.5 0 1 1 8 6 V3 H4.9 V8 A1.7 1.5 0 1 1 3.3 6.6 Z" fill="#858585" stroke="#555" stroke-width=".5"/><path d="M3.8 1.9 H9 V2.5 H3.8 Z" fill="#a8a8a8"/></svg></div><div class="c c4"><span class="n">Z-100</span></div><div class="c c5"><span class="n">BAF -ID- Gothika - Z100 (One)</span></div><div class="c c6"><span class="n">00:00:18:21</span></div></div>
<div class="row alt nm" style="top:373.08px"><div class="c c1"><span class="n">23:03:01</span></div><div class="c c3"><svg class="ri" viewBox="0 0 10 10"><circle cx="5" cy="5" r="4.5" fill="#bdd8f6" stroke="#78a8de" stroke-width=".75"/><circle cx="5" cy="5" r="3.3" fill="#f2f8fe"/><path d="M5 5 L2.2 3.6 A3.2 3.2 0 0 0 2.3 6.7 Z" fill="#b4d2f4" opacity=".85"/><path d="M5 5 L7.7 3.4 A3.2 3.2 0 0 1 7.6 6.9 Z" fill="#c4dcf7" opacity=".8"/><path d="M5 5 L3.6 8 A3.2 3.2 0 0 0 6.4 8 Z" fill="#cfe3f9" opacity=".8"/><circle cx="5" cy="5.1" r=".9" fill="#8fbaea"/></svg></div><div class="c c4"><span class="n">Spice Girls</span></div><div class="c c5"><span class="n">Stop</span></div><div class="c c6"><span class="n">00:03:24:77</span></div></div>
</div>
<div id="vs0"></div>
<div id="vs">
<svg style="left:2.6px;top:2.4px;width:5px;height:4px" viewBox="0 0 6 5"><path d="M3 .8 L5.4 4.2 H.6 Z" fill="#333"/></svg>
<div class="th"><svg style="left:3px;top:101.5px;width:4.4px;height:5px" viewBox="0 0 5 5"><path d="M0 .8 H5 M0 2.5 H5 M0 4.2 H5" stroke="#7a7a7a" stroke-width=".7"/></svg></div>
<svg style="left:2.6px;top:389px;width:5px;height:4px" viewBox="0 0 6 5"><path d="M3 4.2 L5.4 .8 H.6 Z" fill="#333"/></svg>
</div>
</div>
<div id="pst"><svg style="right:.5px;bottom:.5px;width:7px;height:7px" viewBox="0 0 7 7"><path d="M5.5 1.5 h1 v1 h-1z M5.5 3.5 h1 v1 h-1z M5.5 5.5 h1 v1 h-1z M3.5 3.5 h1 v1 h-1z M3.5 5.5 h1 v1 h-1z M1.5 5.5 h1 v1 h-1z" fill="#a9a6a4"/></svg></div>
</div>

<!-- Players panel -->
<div id="pp">
<div class="cap"></div>
<div class="capt"><span class="n" style="transform:scaleX(.82)">Players</span></div>
<svg style="left:461.6px;top:2.2px;width:8px;height:8px" viewBox="0 0 7 7"><rect x=".5" y=".5" width="6" height="6" rx="1" fill="#e3ebf5" stroke="#98a3b3" stroke-width=".6"/><path d="M2 2.4 H5 M2.6 2.4 V4.2 H4.4 V2.4 M3.5 4.2 V5.6" stroke="#5a6676" stroke-width=".6" fill="none"/></svg>
<div class="pl" style="left:3px"><div class="plh"><span class="n">Player A</span></div><div class="disp"><div class="tot"><span class="n">00:02:57:02 Total</span></div><div class="intro"><span class="n">Intro</span></div><div class="cue on"><span class="n r">Cue</span></div><svg class="seg" width="115" height="18" viewBox="0 0 115 18"><path d="M3.60 8.80 H8.80 M6.20 2.50 V15.10 M3.80 2.70 L8.60 14.90 M8.60 2.70 L3.80 14.90" stroke="#093d0f" stroke-width="1.2" fill="none"/><path d="M4.20 1.50 H8.20 M4.20 16.10 H8.20" stroke="#3f73a8" stroke-width="1.2" fill="none" stroke-linecap="round"/><path d="M3.00 2.80 V7.30 M3.00 10.30 V14.80 M9.40 2.80 V7.30 M9.40 10.30 V14.80" stroke="#62a0dc" stroke-width="1.35" fill="none" stroke-linecap="round"/><path d="M8.30 3.20 L6.70 7.30 M5.70 10.30 L4.10 14.40" stroke="#62a0dc" stroke-width="1.15" fill="none"/><path d="M13.77 8.80 H18.97 M16.37 2.50 V15.10 M13.97 2.70 L18.77 14.90 M18.77 2.70 L13.97 14.90" stroke="#093d0f" stroke-width="1.2" fill="none"/><path d="M14.37 1.50 H18.37 M14.37 16.10 H18.37" stroke="#3f73a8" stroke-width="1.2" fill="none" stroke-linecap="round"/><path d="M13.17 2.80 V7.30 M13.17 10.30 V14.80 M19.57 2.80 V7.30 M19.57 10.30 V14.80" stroke="#62a0dc" stroke-width="1.35" fill="none" stroke-linecap="round"/><path d="M18.47 3.20 L16.87 7.30 M15.87 10.30 L14.27 14.40" stroke="#62a0dc" stroke-width="1.15" fill="none"/><rect x="23.34" y="1.50" width="6.40" height="14.60" rx="1.4" fill="none" stroke="#093d0f" stroke-width="1.2"/><path d="M23.94 8.80 H29.14 M26.54 2.50 V15.10 M24.14 2.70 L28.94 14.90 M28.94 2.70 L24.14 14.90" stroke="#093d0f" stroke-width="1.2" fill="none"/><circle cx="26.54" cy="5.6" r=".9" fill="#8fc2ee"/><circle cx="26.54" cy="12.6" r=".9" fill="#8fc2ee"/><path d="M34.11 8.80 H39.31 M36.71 2.50 V15.10 M34.31 2.70 L39.11 14.90 M39.11 2.70 L34.31 14.90" stroke="#093d0f" stroke-width="1.2" fill="none"/><path d="M34.71 1.50 H38.71 M34.71 16.10 H38.71" stroke="#3f73a8" stroke-width="1.2" fill="none" stroke-linecap="round"/><path d="M33.51 2.80 V7.30 M33.51 10.30 V14.80 M39.91 2.80 V7.30 M39.91 10.30 V14.80" stroke="#62a0dc" stroke-width="1.35" fill="none" stroke-linecap="round"/><path d="M38.81 3.20 L37.21 7.30 M36.21 10.30 L34.61 14.40" stroke="#62a0dc" stroke-width="1.15" fill="none"/><path d="M44.28 8.80 H49.48 M46.88 2.50 V15.10 M44.48 2.70 L49.28 14.90 M49.28 2.70 L44.48 14.90" stroke="#093d0f" stroke-width="1.2" fill="none"/><path d="M44.88 1.50 H48.88 M44.88 16.10 H48.88" stroke="#3f73a8" stroke-width="1.2" fill="none" stroke-linecap="round"/><path d="M43.68 2.80 V7.30 M43.68 10.30 V14.80 M50.08 2.80 V7.30 M50.08 10.30 V14.80" stroke="#62a0dc" stroke-width="1.35" fill="none" stroke-linecap="round"/><path d="M48.98 3.20 L47.38 7.30 M46.38 10.30 L44.78 14.40" stroke="#62a0dc" stroke-width="1.15" fill="none"/><rect x="53.85" y="1.50" width="6.40" height="14.60" rx="1.4" fill="none" stroke="#093d0f" stroke-width="1.2"/><path d="M54.45 8.80 H59.65 M57.05 2.50 V15.10 M54.65 2.70 L59.45 14.90 M59.45 2.70 L54.65 14.90" stroke="#093d0f" stroke-width="1.2" fill="none"/><circle cx="57.05" cy="5.6" r=".9" fill="#8fc2ee"/><circle cx="57.05" cy="12.6" r=".9" fill="#8fc2ee"/><path d="M64.62 8.80 H69.82 M67.22 2.50 V15.10 M64.82 2.70 L69.62 14.90 M69.62 2.70 L64.82 14.90" stroke="#093d0f" stroke-width="1.2" fill="none"/><path d="M65.22 1.50 H69.22 M65.22 16.10 H69.22" stroke="#3f73a8" stroke-width="1.2" fill="none" stroke-linecap="round"/><path d="M64.02 2.80 V7.30 M64.02 10.30 V14.80 M70.42 2.80 V7.30 M70.42 10.30 V14.80" stroke="#62a0dc" stroke-width="1.35" fill="none" stroke-linecap="round"/><path d="M69.32 3.20 L67.72 7.30 M66.72 10.30 L65.12 14.40" stroke="#62a0dc" stroke-width="1.15" fill="none"/><path d="M74.79 8.80 H79.99 M77.39 2.50 V15.10 M74.99 2.70 L79.79 14.90 M79.79 2.70 L74.99 14.90" stroke="#093d0f" stroke-width="1.2" fill="none"/><path d="M75.39 1.50 H79.39 M75.39 16.10 H79.39" stroke="#3f73a8" stroke-width="1.2" fill="none" stroke-linecap="round"/><path d="M74.19 2.80 V7.30 M74.19 10.30 V14.80 M80.59 2.80 V7.30 M80.59 10.30 V14.80" stroke="#62a0dc" stroke-width="1.35" fill="none" stroke-linecap="round"/><path d="M79.49 3.20 L77.89 7.30 M76.89 10.30 L75.29 14.40" stroke="#62a0dc" stroke-width="1.15" fill="none"/><rect x="84.36" y="1.50" width="6.40" height="14.60" rx="1.4" fill="none" stroke="#093d0f" stroke-width="1.2"/><path d="M84.96 8.80 H90.16 M87.56 2.50 V15.10 M85.16 2.70 L89.96 14.90 M89.96 2.70 L85.16 14.90" stroke="#093d0f" stroke-width="1.2" fill="none"/><circle cx="87.56" cy="5.6" r=".9" fill="#8fc2ee"/><circle cx="87.56" cy="12.6" r=".9" fill="#8fc2ee"/><path d="M95.13 8.80 H100.33 M97.73 2.50 V15.10 M95.33 2.70 L100.13 14.90 M100.13 2.70 L95.33 14.90" stroke="#093d0f" stroke-width="1.2" fill="none"/><path d="M95.73 1.50 H99.73 M95.73 16.10 H99.73" stroke="#3f73a8" stroke-width="1.2" fill="none" stroke-linecap="round"/><path d="M94.53 2.80 V7.30 M94.53 10.30 V14.80 M100.93 2.80 V7.30 M100.93 10.30 V14.80" stroke="#62a0dc" stroke-width="1.35" fill="none" stroke-linecap="round"/><path d="M99.83 3.20 L98.23 7.30 M97.23 10.30 L95.63 14.40" stroke="#62a0dc" stroke-width="1.15" fill="none"/><path d="M105.30 8.80 H110.50 M107.90 2.50 V15.10 M105.50 2.70 L110.30 14.90 M110.30 2.70 L105.50 14.90" stroke="#093d0f" stroke-width="1.2" fill="none"/><path d="M105.90 1.50 H109.90 M105.90 16.10 H109.90" stroke="#3f73a8" stroke-width="1.2" fill="none" stroke-linecap="round"/><path d="M104.70 2.80 V7.30 M104.70 10.30 V14.80 M111.10 2.80 V7.30 M111.10 10.30 V14.80" stroke="#62a0dc" stroke-width="1.35" fill="none" stroke-linecap="round"/><path d="M110.00 3.20 L108.40 7.30 M107.40 10.30 L105.80 14.40" stroke="#62a0dc" stroke-width="1.15" fill="none"/></svg><div class="trk"><span class="n">Green Day - Let Yourself Go</span></div><div class="prog"></div></div><div class="pb" style="left:1px"><svg viewBox="0 0 10 10" width="8" height="8"><path d="M3 2 L7.5 5 L3 8 Z" fill="#b4bcba"/></svg></div><div class="pb" style="left:22px"><svg viewBox="0 0 10 10" width="8" height="8"><rect x="2.5" y="2.5" width="5" height="5" fill="#cfd3d2"/></svg></div><div class="pb" style="left:95px"><svg viewBox="0 0 10 10" width="8" height="8"><path d="M5 1.5 L6 4 L8.5 4 L6.5 5.6 L7.4 8.2 L5 6.6 L2.6 8.2 L3.5 5.6 L1.5 4 L4 4 Z" fill="#aab3b0"/></svg></div></div>
<div class="pl" style="left:120px"><div class="plh"><span class="n">Player B</span></div><div class="disp"><div class="tot"><span class="n">00:00:11:84 Total</span></div><div class="intro"><span class="n">Intro</span></div><div class="cue"><span class="n r">Cue</span></div><svg class="seg" width="115" height="18" viewBox="0 0 115 18"><path d="M3.60 8.80 H8.80 M6.20 2.50 V15.10 M3.80 2.70 L8.60 14.90 M8.60 2.70 L3.80 14.90" stroke="#093d0f" stroke-width="1.2" fill="none"/><path d="M4.20 1.50 H8.20 M4.20 16.10 H8.20" stroke="#3f73a8" stroke-width="1.2" fill="none" stroke-linecap="round"/><path d="M3.00 2.80 V7.30 M3.00 10.30 V14.80 M9.40 2.80 V7.30 M9.40 10.30 V14.80" stroke="#62a0dc" stroke-width="1.35" fill="none" stroke-linecap="round"/><path d="M8.30 3.20 L6.70 7.30 M5.70 10.30 L4.10 14.40" stroke="#62a0dc" stroke-width="1.15" fill="none"/><path d="M13.77 8.80 H18.97 M16.37 2.50 V15.10 M13.97 2.70 L18.77 14.90 M18.77 2.70 L13.97 14.90" stroke="#093d0f" stroke-width="1.2" fill="none"/><path d="M14.37 1.50 H18.37 M14.37 16.10 H18.37" stroke="#3f73a8" stroke-width="1.2" fill="none" stroke-linecap="round"/><path d="M13.17 2.80 V7.30 M13.17 10.30 V14.80 M19.57 2.80 V7.30 M19.57 10.30 V14.80" stroke="#62a0dc" stroke-width="1.35" fill="none" stroke-linecap="round"/><path d="M18.47 3.20 L16.87 7.30 M15.87 10.30 L14.27 14.40" stroke="#62a0dc" stroke-width="1.15" fill="none"/><rect x="23.34" y="1.50" width="6.40" height="14.60" rx="1.4" fill="none" stroke="#093d0f" stroke-width="1.2"/><path d="M23.94 8.80 H29.14 M26.54 2.50 V15.10 M24.14 2.70 L28.94 14.90 M28.94 2.70 L24.14 14.90" stroke="#093d0f" stroke-width="1.2" fill="none"/><circle cx="26.54" cy="5.6" r=".9" fill="#8fc2ee"/><circle cx="26.54" cy="12.6" r=".9" fill="#8fc2ee"/><path d="M34.11 8.80 H39.31 M36.71 2.50 V15.10 M34.31 2.70 L39.11 14.90 M39.11 2.70 L34.31 14.90" stroke="#093d0f" stroke-width="1.2" fill="none"/><path d="M34.71 1.50 H38.71 M34.71 16.10 H38.71" stroke="#3f73a8" stroke-width="1.2" fill="none" stroke-linecap="round"/><path d="M33.51 2.80 V7.30 M33.51 10.30 V14.80 M39.91 2.80 V7.30 M39.91 10.30 V14.80" stroke="#62a0dc" stroke-width="1.35" fill="none" stroke-linecap="round"/><path d="M38.81 3.20 L37.21 7.30 M36.21 10.30 L34.61 14.40" stroke="#62a0dc" stroke-width="1.15" fill="none"/><path d="M44.28 8.80 H49.48 M46.88 2.50 V15.10 M44.48 2.70 L49.28 14.90 M49.28 2.70 L44.48 14.90" stroke="#093d0f" stroke-width="1.2" fill="none"/><path d="M44.88 1.50 H48.88 M44.88 16.10 H48.88" stroke="#3f73a8" stroke-width="1.2" fill="none" stroke-linecap="round"/><path d="M43.68 2.80 V7.30 M43.68 10.30 V14.80 M50.08 2.80 V7.30 M50.08 10.30 V14.80" stroke="#62a0dc" stroke-width="1.35" fill="none" stroke-linecap="round"/><path d="M48.98 3.20 L47.38 7.30 M46.38 10.30 L44.78 14.40" stroke="#62a0dc" stroke-width="1.15" fill="none"/><rect x="53.85" y="1.50" width="6.40" height="14.60" rx="1.4" fill="none" stroke="#093d0f" stroke-width="1.2"/><path d="M54.45 8.80 H59.65 M57.05 2.50 V15.10 M54.65 2.70 L59.45 14.90 M59.45 2.70 L54.65 14.90" stroke="#093d0f" stroke-width="1.2" fill="none"/><circle cx="57.05" cy="5.6" r=".9" fill="#8fc2ee"/><circle cx="57.05" cy="12.6" r=".9" fill="#8fc2ee"/><path d="M64.62 8.80 H69.82 M67.22 2.50 V15.10 M64.82 2.70 L69.62 14.90 M69.62 2.70 L64.82 14.90" stroke="#093d0f" stroke-width="1.2" fill="none"/><path d="M65.22 1.50 H69.22 M65.22 16.10 H69.22" stroke="#3f73a8" stroke-width="1.2" fill="none" stroke-linecap="round"/><path d="M64.02 2.80 V7.30 M64.02 10.30 V14.80 M70.42 2.80 V7.30 M70.42 10.30 V14.80" stroke="#62a0dc" stroke-width="1.35" fill="none" stroke-linecap="round"/><path d="M69.32 3.20 L67.72 7.30 M66.72 10.30 L65.12 14.40" stroke="#62a0dc" stroke-width="1.15" fill="none"/><path d="M74.79 8.80 H79.99 M77.39 2.50 V15.10 M74.99 2.70 L79.79 14.90 M79.79 2.70 L74.99 14.90" stroke="#093d0f" stroke-width="1.2" fill="none"/><path d="M75.39 1.50 H79.39 M75.39 16.10 H79.39" stroke="#3f73a8" stroke-width="1.2" fill="none" stroke-linecap="round"/><path d="M74.19 2.80 V7.30 M74.19 10.30 V14.80 M80.59 2.80 V7.30 M80.59 10.30 V14.80" stroke="#62a0dc" stroke-width="1.35" fill="none" stroke-linecap="round"/><path d="M79.49 3.20 L77.89 7.30 M76.89 10.30 L75.29 14.40" stroke="#62a0dc" stroke-width="1.15" fill="none"/><rect x="84.36" y="1.50" width="6.40" height="14.60" rx="1.4" fill="none" stroke="#093d0f" stroke-width="1.2"/><path d="M84.96 8.80 H90.16 M87.56 2.50 V15.10 M85.16 2.70 L89.96 14.90 M89.96 2.70 L85.16 14.90" stroke="#093d0f" stroke-width="1.2" fill="none"/><circle cx="87.56" cy="5.6" r=".9" fill="#8fc2ee"/><circle cx="87.56" cy="12.6" r=".9" fill="#8fc2ee"/><path d="M95.13 8.80 H100.33 M97.73 2.50 V15.10 M95.33 2.70 L100.13 14.90 M100.13 2.70 L95.33 14.90" stroke="#093d0f" stroke-width="1.2" fill="none"/><path d="M95.73 1.50 H99.73 M95.73 16.10 H99.73" stroke="#3f73a8" stroke-width="1.2" fill="none" stroke-linecap="round"/><path d="M94.53 2.80 V7.30 M94.53 10.30 V14.80 M100.93 2.80 V7.30 M100.93 10.30 V14.80" stroke="#62a0dc" stroke-width="1.35" fill="none" stroke-linecap="round"/><path d="M99.83 3.20 L98.23 7.30 M97.23 10.30 L95.63 14.40" stroke="#62a0dc" stroke-width="1.15" fill="none"/><path d="M105.30 8.80 H110.50 M107.90 2.50 V15.10 M105.50 2.70 L110.30 14.90 M110.30 2.70 L105.50 14.90" stroke="#093d0f" stroke-width="1.2" fill="none"/><path d="M105.90 1.50 H109.90 M105.90 16.10 H109.90" stroke="#3f73a8" stroke-width="1.2" fill="none" stroke-linecap="round"/><path d="M104.70 2.80 V7.30 M104.70 10.30 V14.80 M111.10 2.80 V7.30 M111.10 10.30 V14.80" stroke="#62a0dc" stroke-width="1.35" fill="none" stroke-linecap="round"/><path d="M110.00 3.20 L108.40 7.30 M107.40 10.30 L105.80 14.40" stroke="#62a0dc" stroke-width="1.15" fill="none"/></svg><div class="trk"><span class="n">Z-100 - PID - Surrius - Z100 (One)</span></div></div><div class="pb" style="left:1px"><svg viewBox="0 0 10 10" width="8" height="8"><path d="M3 2 L7.5 5 L3 8 Z" fill="#b4bcba"/></svg></div><div class="pb" style="left:22px"><svg viewBox="0 0 10 10" width="8" height="8"><rect x="2.5" y="2.5" width="5" height="5" fill="#cfd3d2"/></svg></div><div class="pb" style="left:95px"><svg viewBox="0 0 10 10" width="8" height="8"><path d="M5 1.5 L6 4 L8.5 4 L6.5 5.6 L7.4 8.2 L5 6.6 L2.6 8.2 L3.5 5.6 L1.5 4 L4 4 Z" fill="#aab3b0"/></svg></div></div>
<div class="pl" style="left:237px"><div class="plh"><span class="n">Player C</span></div><div class="disp"><div class="tot"><span class="n">00:03:24:63 Total</span></div><div class="intro"><span class="n">Intro</span></div><div class="cue"><span class="n r">Cue</span></div><svg class="seg" width="115" height="18" viewBox="0 0 115 18"><path d="M3.60 8.80 H8.80 M6.20 2.50 V15.10 M3.80 2.70 L8.60 14.90 M8.60 2.70 L3.80 14.90" stroke="#093d0f" stroke-width="1.2" fill="none"/><path d="M4.20 1.50 H8.20 M4.20 16.10 H8.20" stroke="#3f73a8" stroke-width="1.2" fill="none" stroke-linecap="round"/><path d="M3.00 2.80 V7.30 M3.00 10.30 V14.80 M9.40 2.80 V7.30 M9.40 10.30 V14.80" stroke="#62a0dc" stroke-width="1.35" fill="none" stroke-linecap="round"/><path d="M8.30 3.20 L6.70 7.30 M5.70 10.30 L4.10 14.40" stroke="#62a0dc" stroke-width="1.15" fill="none"/><path d="M13.77 8.80 H18.97 M16.37 2.50 V15.10 M13.97 2.70 L18.77 14.90 M18.77 2.70 L13.97 14.90" stroke="#093d0f" stroke-width="1.2" fill="none"/><path d="M14.37 1.50 H18.37 M14.37 16.10 H18.37" stroke="#3f73a8" stroke-width="1.2" fill="none" stroke-linecap="round"/><path d="M13.17 2.80 V7.30 M13.17 10.30 V14.80 M19.57 2.80 V7.30 M19.57 10.30 V14.80" stroke="#62a0dc" stroke-width="1.35" fill="none" stroke-linecap="round"/><path d="M18.47 3.20 L16.87 7.30 M15.87 10.30 L14.27 14.40" stroke="#62a0dc" stroke-width="1.15" fill="none"/><rect x="23.34" y="1.50" width="6.40" height="14.60" rx="1.4" fill="none" stroke="#093d0f" stroke-width="1.2"/><path d="M23.94 8.80 H29.14 M26.54 2.50 V15.10 M24.14 2.70 L28.94 14.90 M28.94 2.70 L24.14 14.90" stroke="#093d0f" stroke-width="1.2" fill="none"/><circle cx="26.54" cy="5.6" r=".9" fill="#8fc2ee"/><circle cx="26.54" cy="12.6" r=".9" fill="#8fc2ee"/><path d="M34.11 8.80 H39.31 M36.71 2.50 V15.10 M34.31 2.70 L39.11 14.90 M39.11 2.70 L34.31 14.90" stroke="#093d0f" stroke-width="1.2" fill="none"/><path d="M34.71 1.50 H38.71 M34.71 16.10 H38.71" stroke="#3f73a8" stroke-width="1.2" fill="none" stroke-linecap="round"/><path d="M33.51 2.80 V7.30 M33.51 10.30 V14.80 M39.91 2.80 V7.30 M39.91 10.30 V14.80" stroke="#62a0dc" stroke-width="1.35" fill="none" stroke-linecap="round"/><path d="M38.81 3.20 L37.21 7.30 M36.21 10.30 L34.61 14.40" stroke="#62a0dc" stroke-width="1.15" fill="none"/><path d="M44.28 8.80 H49.48 M46.88 2.50 V15.10 M44.48 2.70 L49.28 14.90 M49.28 2.70 L44.48 14.90" stroke="#093d0f" stroke-width="1.2" fill="none"/><path d="M44.88 1.50 H48.88 M44.88 16.10 H48.88" stroke="#3f73a8" stroke-width="1.2" fill="none" stroke-linecap="round"/><path d="M43.68 2.80 V7.30 M43.68 10.30 V14.80 M50.08 2.80 V7.30 M50.08 10.30 V14.80" stroke="#62a0dc" stroke-width="1.35" fill="none" stroke-linecap="round"/><path d="M48.98 3.20 L47.38 7.30 M46.38 10.30 L44.78 14.40" stroke="#62a0dc" stroke-width="1.15" fill="none"/><rect x="53.85" y="1.50" width="6.40" height="14.60" rx="1.4" fill="none" stroke="#093d0f" stroke-width="1.2"/><path d="M54.45 8.80 H59.65 M57.05 2.50 V15.10 M54.65 2.70 L59.45 14.90 M59.45 2.70 L54.65 14.90" stroke="#093d0f" stroke-width="1.2" fill="none"/><circle cx="57.05" cy="5.6" r=".9" fill="#8fc2ee"/><circle cx="57.05" cy="12.6" r=".9" fill="#8fc2ee"/><path d="M64.62 8.80 H69.82 M67.22 2.50 V15.10 M64.82 2.70 L69.62 14.90 M69.62 2.70 L64.82 14.90" stroke="#093d0f" stroke-width="1.2" fill="none"/><path d="M65.22 1.50 H69.22 M65.22 16.10 H69.22" stroke="#3f73a8" stroke-width="1.2" fill="none" stroke-linecap="round"/><path d="M64.02 2.80 V7.30 M64.02 10.30 V14.80 M70.42 2.80 V7.30 M70.42 10.30 V14.80" stroke="#62a0dc" stroke-width="1.35" fill="none" stroke-linecap="round"/><path d="M69.32 3.20 L67.72 7.30 M66.72 10.30 L65.12 14.40" stroke="#62a0dc" stroke-width="1.15" fill="none"/><path d="M74.79 8.80 H79.99 M77.39 2.50 V15.10 M74.99 2.70 L79.79 14.90 M79.79 2.70 L74.99 14.90" stroke="#093d0f" stroke-width="1.2" fill="none"/><path d="M75.39 1.50 H79.39 M75.39 16.10 H79.39" stroke="#3f73a8" stroke-width="1.2" fill="none" stroke-linecap="round"/><path d="M74.19 2.80 V7.30 M74.19 10.30 V14.80 M80.59 2.80 V7.30 M80.59 10.30 V14.80" stroke="#62a0dc" stroke-width="1.35" fill="none" stroke-linecap="round"/><path d="M79.49 3.20 L77.89 7.30 M76.89 10.30 L75.29 14.40" stroke="#62a0dc" stroke-width="1.15" fill="none"/><rect x="84.36" y="1.50" width="6.40" height="14.60" rx="1.4" fill="none" stroke="#093d0f" stroke-width="1.2"/><path d="M84.96 8.80 H90.16 M87.56 2.50 V15.10 M85.16 2.70 L89.96 14.90 M89.96 2.70 L85.16 14.90" stroke="#093d0f" stroke-width="1.2" fill="none"/><circle cx="87.56" cy="5.6" r=".9" fill="#8fc2ee"/><circle cx="87.56" cy="12.6" r=".9" fill="#8fc2ee"/><path d="M95.13 8.80 H100.33 M97.73 2.50 V15.10 M95.33 2.70 L100.13 14.90 M100.13 2.70 L95.33 14.90" stroke="#093d0f" stroke-width="1.2" fill="none"/><path d="M95.73 1.50 H99.73 M95.73 16.10 H99.73" stroke="#3f73a8" stroke-width="1.2" fill="none" stroke-linecap="round"/><path d="M94.53 2.80 V7.30 M94.53 10.30 V14.80 M100.93 2.80 V7.30 M100.93 10.30 V14.80" stroke="#62a0dc" stroke-width="1.35" fill="none" stroke-linecap="round"/><path d="M99.83 3.20 L98.23 7.30 M97.23 10.30 L95.63 14.40" stroke="#62a0dc" stroke-width="1.15" fill="none"/><path d="M105.30 8.80 H110.50 M107.90 2.50 V15.10 M105.50 2.70 L110.30 14.90 M110.30 2.70 L105.50 14.90" stroke="#093d0f" stroke-width="1.2" fill="none"/><path d="M105.90 1.50 H109.90 M105.90 16.10 H109.90" stroke="#3f73a8" stroke-width="1.2" fill="none" stroke-linecap="round"/><path d="M104.70 2.80 V7.30 M104.70 10.30 V14.80 M111.10 2.80 V7.30 M111.10 10.30 V14.80" stroke="#62a0dc" stroke-width="1.35" fill="none" stroke-linecap="round"/><path d="M110.00 3.20 L108.40 7.30 M107.40 10.30 L105.80 14.40" stroke="#62a0dc" stroke-width="1.15" fill="none"/></svg><div class="trk"><span class="n">Blof - Later Als Ik Groter Ben</span></div></div><div class="pb" style="left:1px"><svg viewBox="0 0 10 10" width="8" height="8"><path d="M3 2 L7.5 5 L3 8 Z" fill="#b4bcba"/></svg></div><div class="pb" style="left:22px"><svg viewBox="0 0 10 10" width="8" height="8"><rect x="2.5" y="2.5" width="5" height="5" fill="#cfd3d2"/></svg></div><div class="pb" style="left:95px"><svg viewBox="0 0 10 10" width="8" height="8"><path d="M5 1.5 L6 4 L8.5 4 L6.5 5.6 L7.4 8.2 L5 6.6 L2.6 8.2 L3.5 5.6 L1.5 4 L4 4 Z" fill="#aab3b0"/></svg></div></div>
<div class="pl" style="left:354px"><div class="plh"><span class="n">Player D</span></div><div class="disp"><div class="tot"><span class="n">00:00:06:52 Total</span></div><div class="intro"><span class="n">Intro</span></div><div class="cue"><span class="n r">Cue</span></div><svg class="seg" width="115" height="18" viewBox="0 0 115 18"><path d="M3.60 8.80 H8.80 M6.20 2.50 V15.10 M3.80 2.70 L8.60 14.90 M8.60 2.70 L3.80 14.90" stroke="#093d0f" stroke-width="1.2" fill="none"/><path d="M4.20 1.50 H8.20 M4.20 16.10 H8.20" stroke="#3f73a8" stroke-width="1.2" fill="none" stroke-linecap="round"/><path d="M3.00 2.80 V7.30 M3.00 10.30 V14.80 M9.40 2.80 V7.30 M9.40 10.30 V14.80" stroke="#62a0dc" stroke-width="1.35" fill="none" stroke-linecap="round"/><path d="M8.30 3.20 L6.70 7.30 M5.70 10.30 L4.10 14.40" stroke="#62a0dc" stroke-width="1.15" fill="none"/><path d="M13.77 8.80 H18.97 M16.37 2.50 V15.10 M13.97 2.70 L18.77 14.90 M18.77 2.70 L13.97 14.90" stroke="#093d0f" stroke-width="1.2" fill="none"/><path d="M14.37 1.50 H18.37 M14.37 16.10 H18.37" stroke="#3f73a8" stroke-width="1.2" fill="none" stroke-linecap="round"/><path d="M13.17 2.80 V7.30 M13.17 10.30 V14.80 M19.57 2.80 V7.30 M19.57 10.30 V14.80" stroke="#62a0dc" stroke-width="1.35" fill="none" stroke-linecap="round"/><path d="M18.47 3.20 L16.87 7.30 M15.87 10.30 L14.27 14.40" stroke="#62a0dc" stroke-width="1.15" fill="none"/><rect x="23.34" y="1.50" width="6.40" height="14.60" rx="1.4" fill="none" stroke="#093d0f" stroke-width="1.2"/><path d="M23.94 8.80 H29.14 M26.54 2.50 V15.10 M24.14 2.70 L28.94 14.90 M28.94 2.70 L24.14 14.90" stroke="#093d0f" stroke-width="1.2" fill="none"/><circle cx="26.54" cy="5.6" r=".9" fill="#8fc2ee"/><circle cx="26.54" cy="12.6" r=".9" fill="#8fc2ee"/><path d="M34.11 8.80 H39.31 M36.71 2.50 V15.10 M34.31 2.70 L39.11 14.90 M39.11 2.70 L34.31 14.90" stroke="#093d0f" stroke-width="1.2" fill="none"/><path d="M34.71 1.50 H38.71 M34.71 16.10 H38.71" stroke="#3f73a8" stroke-width="1.2" fill="none" stroke-linecap="round"/><path d="M33.51 2.80 V7.30 M33.51 10.30 V14.80 M39.91 2.80 V7.30 M39.91 10.30 V14.80" stroke="#62a0dc" stroke-width="1.35" fill="none" stroke-linecap="round"/><path d="M38.81 3.20 L37.21 7.30 M36.21 10.30 L34.61 14.40" stroke="#62a0dc" stroke-width="1.15" fill="none"/><path d="M44.28 8.80 H49.48 M46.88 2.50 V15.10 M44.48 2.70 L49.28 14.90 M49.28 2.70 L44.48 14.90" stroke="#093d0f" stroke-width="1.2" fill="none"/><path d="M44.88 1.50 H48.88 M44.88 16.10 H48.88" stroke="#3f73a8" stroke-width="1.2" fill="none" stroke-linecap="round"/><path d="M43.68 2.80 V7.30 M43.68 10.30 V14.80 M50.08 2.80 V7.30 M50.08 10.30 V14.80" stroke="#62a0dc" stroke-width="1.35" fill="none" stroke-linecap="round"/><path d="M48.98 3.20 L47.38 7.30 M46.38 10.30 L44.78 14.40" stroke="#62a0dc" stroke-width="1.15" fill="none"/><rect x="53.85" y="1.50" width="6.40" height="14.60" rx="1.4" fill="none" stroke="#093d0f" stroke-width="1.2"/><path d="M54.45 8.80 H59.65 M57.05 2.50 V15.10 M54.65 2.70 L59.45 14.90 M59.45 2.70 L54.65 14.90" stroke="#093d0f" stroke-width="1.2" fill="none"/><circle cx="57.05" cy="5.6" r=".9" fill="#8fc2ee"/><circle cx="57.05" cy="12.6" r=".9" fill="#8fc2ee"/><path d="M64.62 8.80 H69.82 M67.22 2.50 V15.10 M64.82 2.70 L69.62 14.90 M69.62 2.70 L64.82 14.90" stroke="#093d0f" stroke-width="1.2" fill="none"/><path d="M65.22 1.50 H69.22 M65.22 16.10 H69.22" stroke="#3f73a8" stroke-width="1.2" fill="none" stroke-linecap="round"/><path d="M64.02 2.80 V7.30 M64.02 10.30 V14.80 M70.42 2.80 V7.30 M70.42 10.30 V14.80" stroke="#62a0dc" stroke-width="1.35" fill="none" stroke-linecap="round"/><path d="M69.32 3.20 L67.72 7.30 M66.72 10.30 L65.12 14.40" stroke="#62a0dc" stroke-width="1.15" fill="none"/><path d="M74.79 8.80 H79.99 M77.39 2.50 V15.10 M74.99 2.70 L79.79 14.90 M79.79 2.70 L74.99 14.90" stroke="#093d0f" stroke-width="1.2" fill="none"/><path d="M75.39 1.50 H79.39 M75.39 16.10 H79.39" stroke="#3f73a8" stroke-width="1.2" fill="none" stroke-linecap="round"/><path d="M74.19 2.80 V7.30 M74.19 10.30 V14.80 M80.59 2.80 V7.30 M80.59 10.30 V14.80" stroke="#62a0dc" stroke-width="1.35" fill="none" stroke-linecap="round"/><path d="M79.49 3.20 L77.89 7.30 M76.89 10.30 L75.29 14.40" stroke="#62a0dc" stroke-width="1.15" fill="none"/><rect x="84.36" y="1.50" width="6.40" height="14.60" rx="1.4" fill="none" stroke="#093d0f" stroke-width="1.2"/><path d="M84.96 8.80 H90.16 M87.56 2.50 V15.10 M85.16 2.70 L89.96 14.90 M89.96 2.70 L85.16 14.90" stroke="#093d0f" stroke-width="1.2" fill="none"/><circle cx="87.56" cy="5.6" r=".9" fill="#8fc2ee"/><circle cx="87.56" cy="12.6" r=".9" fill="#8fc2ee"/><path d="M95.13 8.80 H100.33 M97.73 2.50 V15.10 M95.33 2.70 L100.13 14.90 M100.13 2.70 L95.33 14.90" stroke="#093d0f" stroke-width="1.2" fill="none"/><path d="M95.73 1.50 H99.73 M95.73 16.10 H99.73" stroke="#3f73a8" stroke-width="1.2" fill="none" stroke-linecap="round"/><path d="M94.53 2.80 V7.30 M94.53 10.30 V14.80 M100.93 2.80 V7.30 M100.93 10.30 V14.80" stroke="#62a0dc" stroke-width="1.35" fill="none" stroke-linecap="round"/><path d="M99.83 3.20 L98.23 7.30 M97.23 10.30 L95.63 14.40" stroke="#62a0dc" stroke-width="1.15" fill="none"/><path d="M105.30 8.80 H110.50 M107.90 2.50 V15.10 M105.50 2.70 L110.30 14.90 M110.30 2.70 L105.50 14.90" stroke="#093d0f" stroke-width="1.2" fill="none"/><path d="M105.90 1.50 H109.90 M105.90 16.10 H109.90" stroke="#3f73a8" stroke-width="1.2" fill="none" stroke-linecap="round"/><path d="M104.70 2.80 V7.30 M104.70 10.30 V14.80 M111.10 2.80 V7.30 M111.10 10.30 V14.80" stroke="#62a0dc" stroke-width="1.35" fill="none" stroke-linecap="round"/><path d="M110.00 3.20 L108.40 7.30 M107.40 10.30 L105.80 14.40" stroke="#62a0dc" stroke-width="1.15" fill="none"/></svg><div class="trk"><span class="n">Z-100 - PID - Lets GO - Z100 (One)</span></div></div><div class="pb" style="left:1px"><svg viewBox="0 0 10 10" width="8" height="8"><path d="M3 2 L7.5 5 L3 8 Z" fill="#b4bcba"/></svg></div><div class="pb" style="left:22px"><svg viewBox="0 0 10 10" width="8" height="8"><rect x="2.5" y="2.5" width="5" height="5" fill="#cfd3d2"/></svg></div><div class="pb" style="left:95px"><svg viewBox="0 0 10 10" width="8" height="8"><path d="M5 1.5 L6 4 L8.5 4 L6.5 5.6 L7.4 8.2 L5 6.6 L2.6 8.2 L3.5 5.6 L1.5 4 L4 4 Z" fill="#aab3b0"/></svg></div></div>
</div>
</body>
</html>
